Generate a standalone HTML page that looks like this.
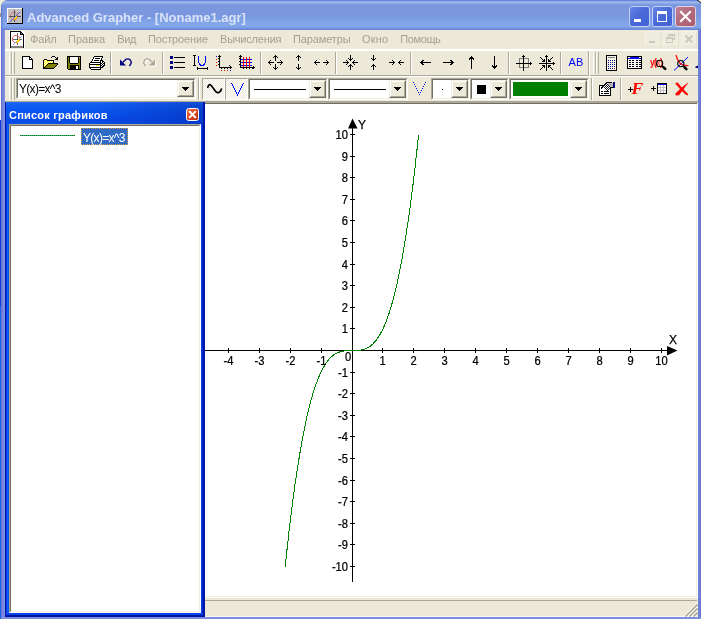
<!DOCTYPE html><html><head><meta charset="utf-8"><title>Advanced Grapher</title><style>
*{margin:0;padding:0;box-sizing:border-box}
html,body{width:701px;height:619px;overflow:hidden;background:#ece9d8}
body{position:relative;font-family:"Liberation Sans",sans-serif;font-size:11px;color:#000}
.a{position:absolute}
.t{position:absolute;white-space:nowrap;line-height:1}
svg{position:absolute;overflow:visible}
.ce{shape-rendering:crispEdges}
</style></head><body><div id="root" class="a" style="left:0;top:0;width:701px;height:619px;will-change:transform">
<div class="a" style="left:0px;top:0px;width:1px;height:619px;background:linear-gradient(#ece9d8 0,#ece9d8 13px,#9c9a8c 13px,#9c9a8c 17px,#f6f5f0 17px,#f6f5f0 120px,#0a3ae0 120px,#0a3ae0 306px,#1264ee 306px);"></div>
<div class="a" style="left:1px;top:0px;width:704px;height:619px;background:linear-gradient(90deg,#6670d2 0,#7480da 1.5px,#7e90e1 3px,#8093e2 4px,#7b8de0 693px,#7484dc 697px,#6a76cc 700px);border-radius:7px 7px 0 0"></div>
<div class="a" style="left:1px;top:0px;width:704px;height:30px;background:linear-gradient(#6280d6 0,#6a88da 1px,#98b3eb 1.6px,#9ab5ec 2.6px,#84a0e3 4px,#7a96df 5.5px,#7a97e0 16px,#83a8ea 24px,#83a7ea 26px,#7a98e2 28px,#6a84d8 29.5px,#6880d6 30px);border-radius:7px 7px 0 0"></div>
<div class="a" style="left:1px;top:6px;width:2px;height:24px;background:linear-gradient(90deg,rgba(80,100,200,.7),rgba(80,100,200,0));"></div>
<div class="a" style="left:5px;top:30px;width:693px;height:587px;background:#ece9d8;"></div>
<div class="a" style="left:1px;top:617px;width:700px;height:2px;background:#7b8de0;"></div>
<div class="t" id="title" style="left:27px;top:10.5px;font-size:13px;font-weight:bold;color:#d9e3f8">Advanced Grapher - [Noname1.agr]</div>
<div class="a" style="left:629px;top:6px;width:21px;height:21px;background:linear-gradient(135deg,#6586e8 0,#4b6ad9 45%,#4262d4 100%);border:1px solid #c3d0f6;border-radius:3px"></div>
<div class="a" style="left:652px;top:6px;width:21px;height:21px;background:linear-gradient(135deg,#6586e8 0,#4b6ad9 45%,#4262d4 100%);border:1px solid #c3d0f6;border-radius:3px"></div>
<div class="a" style="left:675px;top:6px;width:21px;height:21px;background:linear-gradient(135deg,#bd8298 0,#b26a7c 45%,#aa5e70 100%);border:1px solid #e6d3e0;border-radius:3px"></div>
<div class="a" style="left:9px;top:31px;width:16px;height:17px;background:#fff;"></div>
<div class="t mn" style="left:30px;top:34px;color:#a5a190;letter-spacing:-0.14px">Файл</div>
<div class="t mn" style="left:68px;top:34px;color:#a5a190;letter-spacing:0.00px">Правка</div>
<div class="t mn" style="left:117.2px;top:34px;color:#a5a190;letter-spacing:-0.30px">Вид</div>
<div class="t mn" style="left:148px;top:34px;color:#a5a190;letter-spacing:-0.12px">Построение</div>
<div class="t mn" style="left:220px;top:34px;color:#a5a190;letter-spacing:-0.20px">Вычисления</div>
<div class="t mn" style="left:293px;top:34px;color:#a5a190;letter-spacing:-0.12px">Параметры</div>
<div class="t mn" style="left:362px;top:34px;color:#a5a190;letter-spacing:0.21px">Окно</div>
<div class="t mn" style="left:400.3px;top:34px;color:#a5a190;letter-spacing:-0.40px">Помощь</div>
<div class="a" style="left:645px;top:31px;width:16px;height:16px;background:#efede0;border:1px solid #f3f1e6;border-right-color:#e6e3d2;border-bottom-color:#e6e3d2"></div>
<div class="a" style="left:663px;top:31px;width:16px;height:16px;background:#efede0;border:1px solid #f3f1e6;border-right-color:#e6e3d2;border-bottom-color:#e6e3d2"></div>
<div class="a" style="left:681px;top:31px;width:16px;height:16px;background:#efede0;border:1px solid #f3f1e6;border-right-color:#e6e3d2;border-bottom-color:#e6e3d2"></div>
<div class="a" style="left:5px;top:49px;width:693px;height:2px;background:#fff;"></div>
<div class="a" style="left:5px;top:75px;width:693px;height:1px;background:#aca899;"></div>
<div class="a" style="left:5px;top:76px;width:693px;height:1px;background:#fff;"></div>
<div class="t" style="left:568.5px;top:57px;font-size:11px;color:#0000ff;letter-spacing:0.2px">AB</div>
<div class="t" style="left:649.5px;top:56.5px;font-size:10.5px;font-weight:bold;color:#ff0000;letter-spacing:-0.9px;transform:scaleX(.8);transform-origin:0 0">y(x)</div>
<div class="a" style="left:5px;top:101px;width:693px;height:1px;background:#aca899;"></div>
<div class="a" style="left:205px;top:102px;width:493px;height:1px;background:#aca899;"></div>
<div class="a" style="left:205px;top:103px;width:493px;height:1px;background:#716f64;"></div>
<div class="a" style="left:16px;top:78px;width:180px;height:21px;background:#fff;border-left:1px solid #aca899;border-top:1px solid #aca899;border-right:1px solid #fff;border-bottom:1px solid #fff"></div>
<div class="a" style="left:17px;top:79px;width:178px;height:19px;background:#fff;border-left:1px solid #716f64;border-top:1px solid #716f64;border-right:1px solid #f1efe2;border-bottom:1px solid #f1efe2"></div>
<div class="a" style="left:177px;top:80px;width:17px;height:17px;background:#ece9d8;border-left:1px solid #f1efe2;border-top:1px solid #f1efe2;border-right:1px solid #716f64;border-bottom:1px solid #716f64"></div>
<div class="a" style="left:178px;top:81px;width:15px;height:15px;background:#ece9d8;border-left:1px solid #fff;border-top:1px solid #fff;border-right:1px solid #aca899;border-bottom:1px solid #aca899"></div>
<div class="t" id="cbt" style="left:19px;top:82.5px;font-size:12px;letter-spacing:-0.7px">Y(x)=x^3</div>
<div class="a" style="left:202px;top:78px;width:23px;height:22px;background:#f6f5ee;border-left:1px solid #aca899;border-top:1px solid #aca899;border-right:1px solid #fff;border-bottom:1px solid #fff;background-image:repeating-conic-gradient(#fff 0 25%,#ece9d8 0 50%);background-size:2px 2px"></div>
<div class="a" style="left:225px;top:78px;width:23px;height:22px;background:#f6f5ee;border-left:1px solid #aca899;border-top:1px solid #aca899;border-right:1px solid #fff;border-bottom:1px solid #fff;background-image:repeating-conic-gradient(#fff 0 25%,#ece9d8 0 50%);background-size:2px 2px"></div>
<div class="a" style="left:248px;top:78px;width:80px;height:22px;background:#fff;border-left:1px solid #aca899;border-top:1px solid #aca899;border-right:1px solid #fff;border-bottom:1px solid #fff"></div>
<div class="a" style="left:249px;top:79px;width:78px;height:20px;background:#fff;border-left:1px solid #716f64;border-top:1px solid #716f64;border-right:1px solid #f1efe2;border-bottom:1px solid #f1efe2"></div>
<div class="a" style="left:309px;top:80px;width:17px;height:18px;background:#ece9d8;border-left:1px solid #f1efe2;border-top:1px solid #f1efe2;border-right:1px solid #716f64;border-bottom:1px solid #716f64"></div>
<div class="a" style="left:310px;top:81px;width:15px;height:16px;background:#ece9d8;border-left:1px solid #fff;border-top:1px solid #fff;border-right:1px solid #aca899;border-bottom:1px solid #aca899"></div>
<div class="a" style="left:328px;top:78px;width:80px;height:22px;background:#fff;border-left:1px solid #aca899;border-top:1px solid #aca899;border-right:1px solid #fff;border-bottom:1px solid #fff"></div>
<div class="a" style="left:329px;top:79px;width:78px;height:20px;background:#fff;border-left:1px solid #716f64;border-top:1px solid #716f64;border-right:1px solid #f1efe2;border-bottom:1px solid #f1efe2"></div>
<div class="a" style="left:389px;top:80px;width:17px;height:18px;background:#ece9d8;border-left:1px solid #f1efe2;border-top:1px solid #f1efe2;border-right:1px solid #716f64;border-bottom:1px solid #716f64"></div>
<div class="a" style="left:390px;top:81px;width:15px;height:16px;background:#ece9d8;border-left:1px solid #fff;border-top:1px solid #fff;border-right:1px solid #aca899;border-bottom:1px solid #aca899"></div>
<div class="a" style="left:431px;top:78px;width:39px;height:22px;background:#fff;border-left:1px solid #aca899;border-top:1px solid #aca899;border-right:1px solid #fff;border-bottom:1px solid #fff"></div>
<div class="a" style="left:432px;top:79px;width:37px;height:20px;background:#fff;border-left:1px solid #716f64;border-top:1px solid #716f64;border-right:1px solid #f1efe2;border-bottom:1px solid #f1efe2"></div>
<div class="a" style="left:451px;top:80px;width:17px;height:18px;background:#ece9d8;border-left:1px solid #f1efe2;border-top:1px solid #f1efe2;border-right:1px solid #716f64;border-bottom:1px solid #716f64"></div>
<div class="a" style="left:452px;top:81px;width:15px;height:16px;background:#ece9d8;border-left:1px solid #fff;border-top:1px solid #fff;border-right:1px solid #aca899;border-bottom:1px solid #aca899"></div>
<div class="a" style="left:470px;top:78px;width:39px;height:22px;background:#fff;border-left:1px solid #aca899;border-top:1px solid #aca899;border-right:1px solid #fff;border-bottom:1px solid #fff"></div>
<div class="a" style="left:471px;top:79px;width:37px;height:20px;background:#fff;border-left:1px solid #716f64;border-top:1px solid #716f64;border-right:1px solid #f1efe2;border-bottom:1px solid #f1efe2"></div>
<div class="a" style="left:490px;top:80px;width:17px;height:18px;background:#ece9d8;border-left:1px solid #f1efe2;border-top:1px solid #f1efe2;border-right:1px solid #716f64;border-bottom:1px solid #716f64"></div>
<div class="a" style="left:491px;top:81px;width:15px;height:16px;background:#ece9d8;border-left:1px solid #fff;border-top:1px solid #fff;border-right:1px solid #aca899;border-bottom:1px solid #aca899"></div>
<div class="a" style="left:509px;top:78px;width:80px;height:22px;background:#fff;border-left:1px solid #aca899;border-top:1px solid #aca899;border-right:1px solid #fff;border-bottom:1px solid #fff"></div>
<div class="a" style="left:510px;top:79px;width:78px;height:20px;background:#fff;border-left:1px solid #716f64;border-top:1px solid #716f64;border-right:1px solid #f1efe2;border-bottom:1px solid #f1efe2"></div>
<div class="a" style="left:570px;top:80px;width:17px;height:18px;background:#ece9d8;border-left:1px solid #f1efe2;border-top:1px solid #f1efe2;border-right:1px solid #716f64;border-bottom:1px solid #716f64"></div>
<div class="a" style="left:571px;top:81px;width:15px;height:16px;background:#ece9d8;border-left:1px solid #fff;border-top:1px solid #fff;border-right:1px solid #aca899;border-bottom:1px solid #aca899"></div>
<div class="t" style="left:631.5px;top:80px;font-family:'Liberation Serif',serif;font-size:17.5px;font-weight:bold;font-style:italic;color:#ff0000">F</div>
<div class="a" style="left:5px;top:102px;width:200px;height:515px;background:#0831d9;"></div>
<div class="a" style="left:5px;top:102px;width:200px;height:515px;background:linear-gradient(90deg,#0014c8 0,#0a34e4 1.5px,#1060f2 2.5px,#0a4cea 4px,#0a4af0 196px,#0030d8 197px,#0018a8 199px,#00129a 200px);"></div>
<div class="a" style="left:5px;top:102px;width:200px;height:22px;background:linear-gradient(#2a6cf8 0,#1260f4 2px,#0a56f0 9px,#084ce8 17px,#0a4eea 22px);"></div>
<div class="a" style="left:85px;top:102px;width:118px;height:22px;background:linear-gradient(90deg,rgba(0,20,140,0),rgba(0,20,140,.32));"></div>
<div class="a" style="left:5px;top:102px;width:1px;height:515px;background:#0018b0;"></div>
<div class="a" style="left:203px;top:102px;width:2px;height:515px;background:#0016a8;"></div>
<div class="a" style="left:6px;top:613px;width:197px;height:2px;background:#0a44ee;"></div>
<div class="a" style="left:5px;top:615px;width:200px;height:2px;background:#00159e;"></div>
<div class="t" id="ptitle" style="left:9px;top:110px;font-size:11px;font-weight:bold;color:#fff;letter-spacing:0.22px">Список графиков</div>
<div class="a" style="left:186px;top:108px;width:13px;height:13px;background:linear-gradient(135deg,#ea7a55 0,#dc4a22 45%,#b8300e 100%);border:1px solid #fff;border-radius:2.5px"></div>
<div class="a" style="left:9px;top:124px;width:192px;height:489px;background:#fff;border-left:1px solid #aca899;border-top:1px solid #aca899;border-right:1px solid #fff;border-bottom:1px solid #fff"></div>
<div class="a" style="left:10px;top:125px;width:190px;height:487px;background:#fff;border-left:1px solid #716f64;border-top:1px solid #716f64;border-right:1px solid #f1efe2;border-bottom:1px solid #f1efe2"></div>
<div class="a" style="left:81px;top:128px;width:47px;height:17px;background:#316ac5;outline:1px dotted #d6a24a;outline-offset:-1px"></div>
<div class="t" id="lit" style="left:83px;top:131.5px;font-size:12px;letter-spacing:-0.7px;color:#fff">Y(x)=x^3</div>
<div class="a" style="left:20px;top:135px;width:55px;height:1px;background:repeating-linear-gradient(90deg,#008000 0,#008000 1px,#3ea08a 1px,#3ea08a 2px);"></div>
<div class="a" style="left:205px;top:104px;width:491px;height:492px;background:#fff;"></div>
<div class="a" style="left:696px;top:104px;width:1px;height:493px;background:#f1efe2;"></div>
<div class="a" style="left:697px;top:103px;width:1px;height:495px;background:#fff;"></div>
<div class="a" style="left:205px;top:596px;width:492px;height:1px;background:#f1efe2;"></div>
<div class="a" style="left:205px;top:597px;width:492px;height:1px;background:#fff;"></div>
<div class="a" style="left:205px;top:600px;width:492px;height:1px;background:#aca899;"></div>
<div class="a" style="left:205px;top:616px;width:493px;height:1px;background:#f8f7f1;"></div>
<svg style="left:0;top:0" width="701" height="619" viewBox="0 0 701 619"><g class="ce" stroke="#000" stroke-width="1" fill="none"><path d="M205 350.5H668 M352.5 127V582"/><path d="M228.5 348V353"/><path d="M259.5 348V353"/><path d="M290.5 348V353"/><path d="M321.5 348V353"/><path d="M382.5 348V353"/><path d="M413.5 348V353"/><path d="M444.5 348V353"/><path d="M475.5 348V353"/><path d="M506.5 348V353"/><path d="M537.5 348V353"/><path d="M568.5 348V353"/><path d="M599.5 348V353"/><path d="M630.5 348V353"/><path d="M661.5 348V353"/><path d="M350 566.5H355"/><path d="M350 544.5H355"/><path d="M350 523.5H355"/><path d="M350 501.5H355"/><path d="M350 480.5H355"/><path d="M350 458.5H355"/><path d="M350 436.5H355"/><path d="M350 415.5H355"/><path d="M350 393.5H355"/><path d="M350 372.5H355"/><path d="M350 328.5H355"/><path d="M350 307.5H355"/><path d="M350 285.5H355"/><path d="M350 264.5H355"/><path d="M350 242.5H355"/><path d="M350 220.5H355"/><path d="M350 199.5H355"/><path d="M350 177.5H355"/><path d="M350 156.5H355"/><path d="M350 134.5H355"/></g><path d="M667 346L677.5 350.5L667 355.5Z" fill="#000"/><path d="M348 128.5L352.5 118.5L357.5 128.5Z" fill="#000"/><polyline class="ce" fill="none" stroke="#008000" stroke-width="1" points="285.2,566.6 286.2,557.5 287.1,548.6 288.1,540.0 289.0,531.6 290.0,523.5 290.9,515.7 291.9,508.1 292.8,500.7 293.8,493.5 294.7,486.6 295.7,479.9 296.7,473.5 297.6,467.2 298.6,461.2 299.5,455.4 300.5,449.8 301.4,444.4 302.4,439.1 303.3,434.1 304.3,429.3 305.2,424.7 306.2,420.2 307.1,416.0 308.1,411.9 309.0,408.0 310.0,404.2 310.9,400.7 311.9,397.3 312.8,394.0 313.8,390.9 314.7,388.0 315.7,385.2 316.7,382.5 317.6,380.0 318.6,377.6 319.5,375.4 320.5,373.2 321.4,371.2 322.4,369.4 323.3,367.6 324.3,366.0 325.2,364.4 326.2,363.0 327.1,361.7 328.1,360.4 329.0,359.3 330.0,358.3 330.9,357.3 331.9,356.4 332.8,355.6 333.8,354.9 334.8,354.3 335.7,353.7 336.7,353.2 337.6,352.7 338.6,352.3 339.5,352.0 340.5,351.7 341.4,351.4 342.4,351.2 343.3,351.1 344.3,350.9 345.2,350.8 346.2,350.7 347.1,350.7 348.1,350.6 349.0,350.6 350.0,350.6 350.9,350.6 351.9,350.6 352.9,350.6 353.8,350.6 354.8,350.6 355.7,350.6 356.7,350.5 357.6,350.5 358.6,350.4 359.5,350.3 360.5,350.1 361.4,350.0 362.4,349.8 363.3,349.5 364.3,349.2 365.2,348.9 366.2,348.5 367.1,348.0 368.1,347.5 369.0,346.9 370.0,346.3 371.0,345.6 371.9,344.8 372.9,343.9 373.8,342.9 374.8,341.9 375.7,340.8 376.7,339.5 377.6,338.2 378.6,336.8 379.5,335.2 380.5,333.6 381.4,331.8 382.4,330.0 383.3,328.0 384.3,325.8 385.2,323.6 386.2,321.2 387.1,318.7 388.1,316.0 389.1,313.2 390.0,310.3 391.0,307.2 391.9,303.9 392.9,300.5 393.8,297.0 394.8,293.2 395.7,289.3 396.7,285.2 397.6,281.0 398.6,276.5 399.5,271.9 400.5,267.1 401.4,262.1 402.4,256.8 403.3,251.4 404.3,245.8 405.2,240.0 406.2,234.0 407.1,227.7 408.1,221.3 409.1,214.6 410.0,207.7 411.0,200.5 411.9,193.1 412.9,185.5 413.8,177.7 414.8,169.6 415.7,161.2 416.7,152.6 417.6,143.7 418.6,134.6"/><g font-family="Liberation Sans, sans-serif" font-size="12" fill="#000" stroke="#000" stroke-width="0.25"><text transform="translate(228.5,365) scale(.93,1)" text-anchor="middle">-4</text><text transform="translate(259.5,365) scale(.93,1)" text-anchor="middle">-3</text><text transform="translate(290.5,365) scale(.93,1)" text-anchor="middle">-2</text><text transform="translate(321.5,365) scale(.93,1)" text-anchor="middle">-1</text><text transform="translate(382.5,365) scale(.93,1)" text-anchor="middle">1</text><text transform="translate(413.5,365) scale(.93,1)" text-anchor="middle">2</text><text transform="translate(444.5,365) scale(.93,1)" text-anchor="middle">3</text><text transform="translate(475.5,365) scale(.93,1)" text-anchor="middle">4</text><text transform="translate(506.5,365) scale(.93,1)" text-anchor="middle">5</text><text transform="translate(537.5,365) scale(.93,1)" text-anchor="middle">6</text><text transform="translate(568.5,365) scale(.93,1)" text-anchor="middle">7</text><text transform="translate(599.5,365) scale(.93,1)" text-anchor="middle">8</text><text transform="translate(630.5,365) scale(.93,1)" text-anchor="middle">9</text><text transform="translate(661.5,365) scale(.93,1)" text-anchor="middle">10</text><text transform="translate(348,571) scale(.93,1)" text-anchor="end">-10</text><text transform="translate(348,549) scale(.93,1)" text-anchor="end">-9</text><text transform="translate(348,528) scale(.93,1)" text-anchor="end">-8</text><text transform="translate(348,506) scale(.93,1)" text-anchor="end">-7</text><text transform="translate(348,485) scale(.93,1)" text-anchor="end">-6</text><text transform="translate(348,463) scale(.93,1)" text-anchor="end">-5</text><text transform="translate(348,441) scale(.93,1)" text-anchor="end">-4</text><text transform="translate(348,420) scale(.93,1)" text-anchor="end">-3</text><text transform="translate(348,398) scale(.93,1)" text-anchor="end">-2</text><text transform="translate(348,377) scale(.93,1)" text-anchor="end">-1</text><text transform="translate(348,333) scale(.93,1)" text-anchor="end">1</text><text transform="translate(348,312) scale(.93,1)" text-anchor="end">2</text><text transform="translate(348,290) scale(.93,1)" text-anchor="end">3</text><text transform="translate(348,269) scale(.93,1)" text-anchor="end">4</text><text transform="translate(348,247) scale(.93,1)" text-anchor="end">5</text><text transform="translate(348,225) scale(.93,1)" text-anchor="end">6</text><text transform="translate(348,204) scale(.93,1)" text-anchor="end">7</text><text transform="translate(348,182) scale(.93,1)" text-anchor="end">8</text><text transform="translate(348,161) scale(.93,1)" text-anchor="end">9</text><text transform="translate(348,139) scale(.93,1)" text-anchor="end">10</text><text transform="translate(351.3,361) scale(.93,1)" text-anchor="end">0</text><text x="358" y="129">Y</text><text x="669" y="344">X</text></g><g class="ce"><rect x="7" y="8" width="15" height="1" fill="#fff"/><rect x="22" y="8" width="1" height="1" fill="#000"/><rect x="7" y="9" width="1" height="1" fill="#fff"/><rect x="8" y="9" width="14" height="1" fill="#c0c0c0"/><rect x="22" y="9" width="1" height="1" fill="#000"/><rect x="7" y="10" width="1" height="1" fill="#fff"/><rect x="8" y="10" width="6" height="1" fill="#c0c0c0"/><rect x="14" y="10" width="1" height="1" fill="#505050"/><rect x="15" y="10" width="7" height="1" fill="#c0c0c0"/><rect x="22" y="10" width="1" height="1" fill="#000"/><rect x="7" y="11" width="1" height="1" fill="#fff"/><rect x="8" y="11" width="6" height="1" fill="#c0c0c0"/><rect x="14" y="11" width="1" height="1" fill="#505050"/><rect x="15" y="11" width="7" height="1" fill="#c0c0c0"/><rect x="22" y="11" width="1" height="1" fill="#000"/><rect x="7" y="12" width="1" height="1" fill="#fff"/><rect x="8" y="12" width="4" height="1" fill="#c0c0c0"/><rect x="12" y="12" width="2" height="1" fill="#d87878"/><rect x="14" y="12" width="1" height="1" fill="#505050"/><rect x="15" y="12" width="1" height="1" fill="#d87878"/><rect x="16" y="12" width="3" height="1" fill="#c0c0c0"/><rect x="19" y="12" width="1" height="1" fill="#5858d0"/><rect x="20" y="12" width="2" height="1" fill="#c0c0c0"/><rect x="22" y="12" width="1" height="1" fill="#000"/><rect x="7" y="13" width="1" height="1" fill="#fff"/><rect x="8" y="13" width="3" height="1" fill="#c0c0c0"/><rect x="11" y="13" width="1" height="1" fill="#d87878"/><rect x="12" y="13" width="2" height="1" fill="#c0c0c0"/><rect x="14" y="13" width="1" height="1" fill="#505050"/><rect x="15" y="13" width="1" height="1" fill="#c0c0c0"/><rect x="16" y="13" width="1" height="1" fill="#d87878"/><rect x="17" y="13" width="1" height="1" fill="#c0c0c0"/><rect x="18" y="13" width="1" height="1" fill="#5858d0"/><rect x="19" y="13" width="3" height="1" fill="#c0c0c0"/><rect x="22" y="13" width="1" height="1" fill="#000"/><rect x="7" y="14" width="1" height="1" fill="#fff"/><rect x="8" y="14" width="2" height="1" fill="#c0c0c0"/><rect x="10" y="14" width="1" height="1" fill="#d87878"/><rect x="11" y="14" width="3" height="1" fill="#c0c0c0"/><rect x="14" y="14" width="1" height="1" fill="#505050"/><rect x="15" y="14" width="2" height="1" fill="#c0c0c0"/><rect x="17" y="14" width="1" height="1" fill="#5858d0"/><rect x="18" y="14" width="4" height="1" fill="#c0c0c0"/><rect x="22" y="14" width="1" height="1" fill="#000"/><rect x="7" y="15" width="1" height="1" fill="#fff"/><rect x="8" y="15" width="2" height="1" fill="#c0c0c0"/><rect x="10" y="15" width="1" height="1" fill="#d87878"/><rect x="11" y="15" width="3" height="1" fill="#c0c0c0"/><rect x="14" y="15" width="1" height="1" fill="#505050"/><rect x="15" y="15" width="1" height="1" fill="#c0c0c0"/><rect x="16" y="15" width="1" height="1" fill="#5858d0"/><rect x="17" y="15" width="1" height="1" fill="#d87878"/><rect x="18" y="15" width="4" height="1" fill="#c0c0c0"/><rect x="22" y="15" width="1" height="1" fill="#000"/><rect x="7" y="16" width="1" height="1" fill="#fff"/><rect x="8" y="16" width="1" height="1" fill="#c0c0c0"/><rect x="9" y="16" width="6" height="1" fill="#505050"/><rect x="15" y="16" width="1" height="1" fill="#5858d0"/><rect x="16" y="16" width="1" height="1" fill="#ffee00"/><rect x="17" y="16" width="4" height="1" fill="#505050"/><rect x="21" y="16" width="1" height="1" fill="#c0c0c0"/><rect x="22" y="16" width="1" height="1" fill="#000"/><rect x="7" y="17" width="1" height="1" fill="#fff"/><rect x="8" y="17" width="2" height="1" fill="#c0c0c0"/><rect x="10" y="17" width="1" height="1" fill="#d87878"/><rect x="11" y="17" width="3" height="1" fill="#c0c0c0"/><rect x="14" y="17" width="1" height="1" fill="#5858d0"/><rect x="15" y="17" width="2" height="1" fill="#ffee00"/><rect x="17" y="17" width="1" height="1" fill="#d87878"/><rect x="18" y="17" width="4" height="1" fill="#c0c0c0"/><rect x="22" y="17" width="1" height="1" fill="#000"/><rect x="7" y="18" width="1" height="1" fill="#fff"/><rect x="8" y="18" width="3" height="1" fill="#c0c0c0"/><rect x="11" y="18" width="1" height="1" fill="#d87878"/><rect x="12" y="18" width="1" height="1" fill="#c0c0c0"/><rect x="13" y="18" width="1" height="1" fill="#5858d0"/><rect x="14" y="18" width="2" height="1" fill="#ffee00"/><rect x="16" y="18" width="1" height="1" fill="#ff9000"/><rect x="17" y="18" width="5" height="1" fill="#c0c0c0"/><rect x="22" y="18" width="1" height="1" fill="#000"/><rect x="7" y="19" width="1" height="1" fill="#fff"/><rect x="8" y="19" width="4" height="1" fill="#c0c0c0"/><rect x="12" y="19" width="1" height="1" fill="#5858d0"/><rect x="13" y="19" width="2" height="1" fill="#ff9000"/><rect x="15" y="19" width="1" height="1" fill="#d87878"/><rect x="16" y="19" width="6" height="1" fill="#c0c0c0"/><rect x="22" y="19" width="1" height="1" fill="#000"/><rect x="7" y="20" width="1" height="1" fill="#fff"/><rect x="8" y="20" width="3" height="1" fill="#c0c0c0"/><rect x="11" y="20" width="1" height="1" fill="#5858d0"/><rect x="12" y="20" width="2" height="1" fill="#c0c0c0"/><rect x="14" y="20" width="1" height="1" fill="#505050"/><rect x="15" y="20" width="7" height="1" fill="#c0c0c0"/><rect x="22" y="20" width="1" height="1" fill="#000"/><rect x="7" y="21" width="1" height="1" fill="#fff"/><rect x="8" y="21" width="2" height="1" fill="#c0c0c0"/><rect x="10" y="21" width="1" height="1" fill="#5858d0"/><rect x="11" y="21" width="3" height="1" fill="#c0c0c0"/><rect x="14" y="21" width="1" height="1" fill="#505050"/><rect x="15" y="21" width="7" height="1" fill="#c0c0c0"/><rect x="22" y="21" width="1" height="1" fill="#000"/><rect x="7" y="22" width="1" height="1" fill="#fff"/><rect x="8" y="22" width="14" height="1" fill="#c0c0c0"/><rect x="22" y="22" width="1" height="1" fill="#000"/><rect x="7" y="23" width="16" height="1" fill="#000"/></g><rect class="ce" x="634" y="19" width="7" height="3" fill="#fff"/><path d="M696.6 0H701V3.6Z" fill="#15151f"/><path d="M698 0H701V2.4Z" fill="#ece9d8"/><path class="ce" d="M657 11h10v11h-10z M658 14v7h8v-7z" fill="#fff" fill-rule="evenodd"/><path d="M681 12L690 21M690 12L681 21" stroke="#fff" stroke-width="2.2" stroke-linecap="square" fill="none"/><g class="ce"><rect x="10" y="31" width="11" height="1" fill="#000"/><rect x="10" y="32" width="1" height="1" fill="#000"/><rect x="11" y="32" width="9" height="1" fill="#fff"/><rect x="20" y="32" width="2" height="1" fill="#000"/><rect x="10" y="33" width="1" height="1" fill="#000"/><rect x="11" y="33" width="6" height="1" fill="#fff"/><rect x="17" y="33" width="1" height="1" fill="#686868"/><rect x="18" y="33" width="2" height="1" fill="#fff"/><rect x="20" y="33" width="1" height="1" fill="#000"/><rect x="21" y="33" width="1" height="1" fill="#808080"/><rect x="22" y="33" width="1" height="1" fill="#000"/><rect x="10" y="34" width="1" height="1" fill="#000"/><rect x="11" y="34" width="6" height="1" fill="#fff"/><rect x="17" y="34" width="1" height="1" fill="#686868"/><rect x="18" y="34" width="2" height="1" fill="#fff"/><rect x="20" y="34" width="4" height="1" fill="#000"/><rect x="10" y="35" width="1" height="1" fill="#000"/><rect x="11" y="35" width="3" height="1" fill="#fff"/><rect x="14" y="35" width="3" height="1" fill="#ff6868"/><rect x="17" y="35" width="1" height="1" fill="#686868"/><rect x="18" y="35" width="5" height="1" fill="#fff"/><rect x="23" y="35" width="1" height="1" fill="#000"/><rect x="10" y="36" width="1" height="1" fill="#000"/><rect x="11" y="36" width="2" height="1" fill="#fff"/><rect x="13" y="36" width="1" height="1" fill="#ff6868"/><rect x="14" y="36" width="3" height="1" fill="#fff"/><rect x="17" y="36" width="1" height="1" fill="#686868"/><rect x="18" y="36" width="1" height="1" fill="#ff6868"/><rect x="19" y="36" width="2" height="1" fill="#fff"/><rect x="21" y="36" width="1" height="1" fill="#b0b0f0"/><rect x="22" y="36" width="1" height="1" fill="#fff"/><rect x="23" y="36" width="1" height="1" fill="#000"/><rect x="10" y="37" width="1" height="1" fill="#000"/><rect x="11" y="37" width="1" height="1" fill="#fff"/><rect x="12" y="37" width="1" height="1" fill="#ff6868"/><rect x="13" y="37" width="4" height="1" fill="#fff"/><rect x="17" y="37" width="1" height="1" fill="#686868"/><rect x="18" y="37" width="1" height="1" fill="#fff"/><rect x="19" y="37" width="1" height="1" fill="#ff6868"/><rect x="20" y="37" width="1" height="1" fill="#b0b0f0"/><rect x="21" y="37" width="2" height="1" fill="#fff"/><rect x="23" y="37" width="1" height="1" fill="#000"/><rect x="10" y="38" width="1" height="1" fill="#000"/><rect x="11" y="38" width="1" height="1" fill="#fff"/><rect x="12" y="38" width="1" height="1" fill="#ff6868"/><rect x="13" y="38" width="4" height="1" fill="#fff"/><rect x="17" y="38" width="1" height="1" fill="#686868"/><rect x="18" y="38" width="1" height="1" fill="#fff"/><rect x="19" y="38" width="1" height="1" fill="#b0b0f0"/><rect x="20" y="38" width="3" height="1" fill="#fff"/><rect x="23" y="38" width="1" height="1" fill="#000"/><rect x="10" y="39" width="1" height="1" fill="#000"/><rect x="11" y="39" width="1" height="1" fill="#fff"/><rect x="12" y="39" width="1" height="1" fill="#ff6868"/><rect x="13" y="39" width="4" height="1" fill="#686868"/><rect x="17" y="39" width="1" height="1" fill="#202060"/><rect x="18" y="39" width="1" height="1" fill="#ffee00"/><rect x="19" y="39" width="1" height="1" fill="#ff9000"/><rect x="20" y="39" width="2" height="1" fill="#686868"/><rect x="22" y="39" width="1" height="1" fill="#fff"/><rect x="23" y="39" width="1" height="1" fill="#000"/><rect x="10" y="40" width="1" height="1" fill="#000"/><rect x="11" y="40" width="1" height="1" fill="#fff"/><rect x="12" y="40" width="1" height="1" fill="#ff6868"/><rect x="13" y="40" width="4" height="1" fill="#fff"/><rect x="17" y="40" width="2" height="1" fill="#ffee00"/><rect x="19" y="40" width="1" height="1" fill="#ff9000"/><rect x="20" y="40" width="3" height="1" fill="#fff"/><rect x="23" y="40" width="1" height="1" fill="#000"/><rect x="10" y="41" width="1" height="1" fill="#000"/><rect x="11" y="41" width="2" height="1" fill="#fff"/><rect x="13" y="41" width="1" height="1" fill="#ff6868"/><rect x="14" y="41" width="2" height="1" fill="#fff"/><rect x="16" y="41" width="1" height="1" fill="#b0b0f0"/><rect x="17" y="41" width="1" height="1" fill="#ffee00"/><rect x="18" y="41" width="1" height="1" fill="#ff9000"/><rect x="19" y="41" width="4" height="1" fill="#fff"/><rect x="23" y="41" width="1" height="1" fill="#000"/><rect x="10" y="42" width="1" height="1" fill="#000"/><rect x="11" y="42" width="3" height="1" fill="#fff"/><rect x="14" y="42" width="1" height="1" fill="#ff6868"/><rect x="15" y="42" width="1" height="1" fill="#b0b0f0"/><rect x="16" y="42" width="2" height="1" fill="#ff9000"/><rect x="18" y="42" width="5" height="1" fill="#fff"/><rect x="23" y="42" width="1" height="1" fill="#000"/><rect x="10" y="43" width="1" height="1" fill="#000"/><rect x="11" y="43" width="3" height="1" fill="#fff"/><rect x="14" y="43" width="1" height="1" fill="#b0b0f0"/><rect x="15" y="43" width="2" height="1" fill="#fff"/><rect x="17" y="43" width="1" height="1" fill="#686868"/><rect x="18" y="43" width="5" height="1" fill="#fff"/><rect x="23" y="43" width="1" height="1" fill="#000"/><rect x="10" y="44" width="1" height="1" fill="#000"/><rect x="11" y="44" width="2" height="1" fill="#fff"/><rect x="13" y="44" width="1" height="1" fill="#b0b0f0"/><rect x="14" y="44" width="3" height="1" fill="#fff"/><rect x="17" y="44" width="1" height="1" fill="#686868"/><rect x="18" y="44" width="5" height="1" fill="#fff"/><rect x="23" y="44" width="1" height="1" fill="#000"/><rect x="10" y="45" width="1" height="1" fill="#000"/><rect x="11" y="45" width="12" height="1" fill="#fff"/><rect x="23" y="45" width="1" height="1" fill="#000"/><rect x="10" y="46" width="1" height="1" fill="#000"/><rect x="11" y="46" width="12" height="1" fill="#808080"/><rect x="23" y="46" width="1" height="1" fill="#000"/><rect x="10" y="47" width="1" height="1" fill="#000"/><rect x="11" y="47" width="12" height="1" fill="#808080"/><rect x="23" y="47" width="1" height="1" fill="#000"/></g><rect class="ce" x="649" y="41" width="6" height="2" fill="#cbc8ba"/><path class="ce" d="M668 34h7v6h-2v-1h1v-3h-5v1h-1z M666 37h7v6h-7z M667 39v3h5v-3z" fill="#cbc8ba" fill-rule="evenodd"/><path d="M685.7 35.7L692.3 42.3M692.3 35.7L685.7 42.3" stroke="#cbc8ba" stroke-width="2" fill="none"/><rect class="ce" x="9" y="52" width="1" height="22" fill="#fff"/><rect class="ce" x="10" y="52" width="1" height="22" fill="#e4e1d0"/><rect class="ce" x="11" y="52" width="1" height="22" fill="#b4b09c"/><rect class="ce" x="12" y="52" width="1" height="22" fill="#fff"/><rect class="ce" x="13" y="52" width="1" height="22" fill="#e4e1d0"/><rect class="ce" x="14" y="52" width="1" height="22" fill="#b4b09c"/><g class="ce"><rect x="22" y="56" width="8" height="1" fill="#000"/><rect x="22" y="57" width="1" height="1" fill="#000"/><rect x="23" y="57" width="6" height="1" fill="#fff"/><rect x="29" y="57" width="2" height="1" fill="#000"/><rect x="22" y="58" width="1" height="1" fill="#000"/><rect x="23" y="58" width="6" height="1" fill="#fff"/><rect x="29" y="58" width="1" height="1" fill="#000"/><rect x="30" y="58" width="1" height="1" fill="#fff"/><rect x="31" y="58" width="1" height="1" fill="#000"/><rect x="22" y="59" width="1" height="1" fill="#000"/><rect x="23" y="59" width="6" height="1" fill="#fff"/><rect x="29" y="59" width="4" height="1" fill="#000"/><rect x="22" y="60" width="1" height="1" fill="#000"/><rect x="23" y="60" width="9" height="1" fill="#fff"/><rect x="32" y="60" width="1" height="1" fill="#000"/><rect x="22" y="61" width="1" height="1" fill="#000"/><rect x="23" y="61" width="9" height="1" fill="#fff"/><rect x="32" y="61" width="1" height="1" fill="#000"/><rect x="22" y="62" width="1" height="1" fill="#000"/><rect x="23" y="62" width="9" height="1" fill="#fff"/><rect x="32" y="62" width="1" height="1" fill="#000"/><rect x="22" y="63" width="1" height="1" fill="#000"/><rect x="23" y="63" width="9" height="1" fill="#fff"/><rect x="32" y="63" width="1" height="1" fill="#000"/><rect x="22" y="64" width="1" height="1" fill="#000"/><rect x="23" y="64" width="9" height="1" fill="#fff"/><rect x="32" y="64" width="1" height="1" fill="#000"/><rect x="22" y="65" width="1" height="1" fill="#000"/><rect x="23" y="65" width="9" height="1" fill="#fff"/><rect x="32" y="65" width="1" height="1" fill="#000"/><rect x="22" y="66" width="1" height="1" fill="#000"/><rect x="23" y="66" width="9" height="1" fill="#fff"/><rect x="32" y="66" width="1" height="1" fill="#000"/><rect x="22" y="67" width="1" height="1" fill="#000"/><rect x="23" y="67" width="9" height="1" fill="#fff"/><rect x="32" y="67" width="1" height="1" fill="#000"/><rect x="22" y="68" width="11" height="1" fill="#000"/></g><g class="ce"><rect x="52" y="56" width="3" height="1" fill="#000"/><rect x="51" y="57" width="1" height="1" fill="#000"/><rect x="55" y="57" width="1" height="1" fill="#000"/><rect x="57" y="57" width="1" height="1" fill="#000"/><rect x="56" y="58" width="2" height="1" fill="#000"/><rect x="44" y="59" width="3" height="1" fill="#000"/><rect x="55" y="59" width="3" height="1" fill="#000"/><rect x="43" y="60" width="1" height="1" fill="#000"/><rect x="44" y="60" width="1" height="1" fill="#ffff00"/><rect x="45" y="60" width="1" height="1" fill="#fff"/><rect x="46" y="60" width="1" height="1" fill="#ffff00"/><rect x="47" y="60" width="7" height="1" fill="#000"/><rect x="43" y="61" width="1" height="1" fill="#000"/><rect x="44" y="61" width="1" height="1" fill="#fff"/><rect x="45" y="61" width="1" height="1" fill="#ffff00"/><rect x="46" y="61" width="1" height="1" fill="#fff"/><rect x="47" y="61" width="1" height="1" fill="#ffff00"/><rect x="48" y="61" width="1" height="1" fill="#fff"/><rect x="49" y="61" width="1" height="1" fill="#ffff00"/><rect x="50" y="61" width="1" height="1" fill="#fff"/><rect x="51" y="61" width="1" height="1" fill="#ffff00"/><rect x="52" y="61" width="1" height="1" fill="#fff"/><rect x="53" y="61" width="1" height="1" fill="#000"/><rect x="43" y="62" width="1" height="1" fill="#000"/><rect x="44" y="62" width="1" height="1" fill="#ffff00"/><rect x="45" y="62" width="1" height="1" fill="#fff"/><rect x="46" y="62" width="1" height="1" fill="#ffff00"/><rect x="47" y="62" width="1" height="1" fill="#fff"/><rect x="48" y="62" width="1" height="1" fill="#ffff00"/><rect x="49" y="62" width="1" height="1" fill="#fff"/><rect x="50" y="62" width="1" height="1" fill="#ffff00"/><rect x="51" y="62" width="1" height="1" fill="#fff"/><rect x="52" y="62" width="1" height="1" fill="#ffff00"/><rect x="53" y="62" width="1" height="1" fill="#000"/><rect x="43" y="63" width="1" height="1" fill="#000"/><rect x="44" y="63" width="1" height="1" fill="#fff"/><rect x="45" y="63" width="1" height="1" fill="#ffff00"/><rect x="46" y="63" width="1" height="1" fill="#fff"/><rect x="47" y="63" width="1" height="1" fill="#ffff00"/><rect x="48" y="63" width="10" height="1" fill="#000"/><rect x="43" y="64" width="1" height="1" fill="#000"/><rect x="44" y="64" width="1" height="1" fill="#ffff00"/><rect x="45" y="64" width="1" height="1" fill="#fff"/><rect x="46" y="64" width="1" height="1" fill="#ffff00"/><rect x="47" y="64" width="1" height="1" fill="#000"/><rect x="48" y="64" width="9" height="1" fill="#808000"/><rect x="57" y="64" width="1" height="1" fill="#000"/><rect x="43" y="65" width="1" height="1" fill="#000"/><rect x="44" y="65" width="1" height="1" fill="#fff"/><rect x="45" y="65" width="1" height="1" fill="#ffff00"/><rect x="46" y="65" width="1" height="1" fill="#000"/><rect x="47" y="65" width="9" height="1" fill="#808000"/><rect x="56" y="65" width="1" height="1" fill="#000"/><rect x="43" y="66" width="1" height="1" fill="#000"/><rect x="44" y="66" width="1" height="1" fill="#ffff00"/><rect x="45" y="66" width="1" height="1" fill="#000"/><rect x="46" y="66" width="9" height="1" fill="#808000"/><rect x="55" y="66" width="1" height="1" fill="#000"/><rect x="43" y="67" width="2" height="1" fill="#000"/><rect x="45" y="67" width="9" height="1" fill="#808000"/><rect x="54" y="67" width="1" height="1" fill="#000"/><rect x="43" y="68" width="11" height="1" fill="#000"/></g><g class="ce"><rect x="67" y="56" width="14" height="1" fill="#000"/><rect x="67" y="57" width="1" height="1" fill="#000"/><rect x="68" y="57" width="1" height="1" fill="#808000"/><rect x="69" y="57" width="1" height="1" fill="#000"/><rect x="70" y="57" width="8" height="1" fill="#fff"/><rect x="78" y="57" width="1" height="1" fill="#000"/><rect x="79" y="57" width="1" height="1" fill="#c0c0c0"/><rect x="80" y="57" width="1" height="1" fill="#000"/><rect x="67" y="58" width="1" height="1" fill="#000"/><rect x="68" y="58" width="1" height="1" fill="#808000"/><rect x="69" y="58" width="1" height="1" fill="#000"/><rect x="70" y="58" width="8" height="1" fill="#fff"/><rect x="78" y="58" width="1" height="1" fill="#000"/><rect x="79" y="58" width="1" height="1" fill="#808000"/><rect x="80" y="58" width="1" height="1" fill="#000"/><rect x="67" y="59" width="1" height="1" fill="#000"/><rect x="68" y="59" width="1" height="1" fill="#808000"/><rect x="69" y="59" width="1" height="1" fill="#000"/><rect x="70" y="59" width="8" height="1" fill="#fff"/><rect x="78" y="59" width="1" height="1" fill="#000"/><rect x="79" y="59" width="1" height="1" fill="#808000"/><rect x="80" y="59" width="1" height="1" fill="#000"/><rect x="67" y="60" width="1" height="1" fill="#000"/><rect x="68" y="60" width="1" height="1" fill="#808000"/><rect x="69" y="60" width="1" height="1" fill="#000"/><rect x="70" y="60" width="8" height="1" fill="#fff"/><rect x="78" y="60" width="1" height="1" fill="#000"/><rect x="79" y="60" width="1" height="1" fill="#808000"/><rect x="80" y="60" width="1" height="1" fill="#000"/><rect x="67" y="61" width="1" height="1" fill="#000"/><rect x="68" y="61" width="1" height="1" fill="#808000"/><rect x="69" y="61" width="1" height="1" fill="#000"/><rect x="70" y="61" width="8" height="1" fill="#fff"/><rect x="78" y="61" width="1" height="1" fill="#000"/><rect x="79" y="61" width="1" height="1" fill="#808000"/><rect x="80" y="61" width="1" height="1" fill="#000"/><rect x="67" y="62" width="1" height="1" fill="#000"/><rect x="68" y="62" width="1" height="1" fill="#808000"/><rect x="69" y="62" width="1" height="1" fill="#000"/><rect x="70" y="62" width="8" height="1" fill="#fff"/><rect x="78" y="62" width="1" height="1" fill="#000"/><rect x="79" y="62" width="1" height="1" fill="#808000"/><rect x="80" y="62" width="1" height="1" fill="#000"/><rect x="67" y="63" width="1" height="1" fill="#000"/><rect x="68" y="63" width="2" height="1" fill="#808000"/><rect x="70" y="63" width="8" height="1" fill="#000"/><rect x="78" y="63" width="2" height="1" fill="#808000"/><rect x="80" y="63" width="1" height="1" fill="#000"/><rect x="67" y="64" width="1" height="1" fill="#000"/><rect x="68" y="64" width="12" height="1" fill="#808000"/><rect x="80" y="64" width="1" height="1" fill="#000"/><rect x="67" y="65" width="1" height="1" fill="#000"/><rect x="68" y="65" width="2" height="1" fill="#808000"/><rect x="70" y="65" width="9" height="1" fill="#000"/><rect x="79" y="65" width="1" height="1" fill="#808000"/><rect x="80" y="65" width="1" height="1" fill="#000"/><rect x="67" y="66" width="1" height="1" fill="#000"/><rect x="68" y="66" width="2" height="1" fill="#808000"/><rect x="70" y="66" width="6" height="1" fill="#000"/><rect x="76" y="66" width="2" height="1" fill="#fff"/><rect x="78" y="66" width="1" height="1" fill="#000"/><rect x="79" y="66" width="1" height="1" fill="#808000"/><rect x="80" y="66" width="1" height="1" fill="#000"/><rect x="67" y="67" width="1" height="1" fill="#000"/><rect x="68" y="67" width="2" height="1" fill="#808000"/><rect x="70" y="67" width="6" height="1" fill="#000"/><rect x="76" y="67" width="2" height="1" fill="#fff"/><rect x="78" y="67" width="1" height="1" fill="#000"/><rect x="79" y="67" width="1" height="1" fill="#808000"/><rect x="80" y="67" width="1" height="1" fill="#000"/><rect x="67" y="68" width="1" height="1" fill="#000"/><rect x="68" y="68" width="2" height="1" fill="#808000"/><rect x="70" y="68" width="6" height="1" fill="#000"/><rect x="76" y="68" width="2" height="1" fill="#fff"/><rect x="78" y="68" width="1" height="1" fill="#000"/><rect x="79" y="68" width="1" height="1" fill="#808000"/><rect x="80" y="68" width="1" height="1" fill="#000"/><rect x="68" y="69" width="13" height="1" fill="#000"/></g><g class="ce"><rect x="94" y="56" width="9" height="1" fill="#000"/><rect x="93" y="57" width="1" height="1" fill="#000"/><rect x="94" y="57" width="8" height="1" fill="#fff"/><rect x="102" y="57" width="1" height="1" fill="#000"/><rect x="93" y="58" width="1" height="1" fill="#000"/><rect x="94" y="58" width="1" height="1" fill="#fff"/><rect x="95" y="58" width="5" height="1" fill="#000"/><rect x="100" y="58" width="1" height="1" fill="#fff"/><rect x="101" y="58" width="1" height="1" fill="#000"/><rect x="92" y="59" width="1" height="1" fill="#000"/><rect x="93" y="59" width="8" height="1" fill="#fff"/><rect x="101" y="59" width="1" height="1" fill="#000"/><rect x="92" y="60" width="1" height="1" fill="#000"/><rect x="93" y="60" width="1" height="1" fill="#fff"/><rect x="94" y="60" width="5" height="1" fill="#000"/><rect x="99" y="60" width="1" height="1" fill="#fff"/><rect x="100" y="60" width="3" height="1" fill="#000"/><rect x="91" y="61" width="1" height="1" fill="#000"/><rect x="92" y="61" width="8" height="1" fill="#fff"/><rect x="100" y="61" width="1" height="1" fill="#000"/><rect x="101" y="61" width="1" height="1" fill="#fff"/><rect x="102" y="61" width="2" height="1" fill="#000"/><rect x="90" y="62" width="11" height="1" fill="#000"/><rect x="101" y="62" width="1" height="1" fill="#fff"/><rect x="102" y="62" width="1" height="1" fill="#000"/><rect x="103" y="62" width="1" height="1" fill="#fff"/><rect x="104" y="62" width="1" height="1" fill="#000"/><rect x="89" y="63" width="1" height="1" fill="#000"/><rect x="90" y="63" width="10" height="1" fill="#fff"/><rect x="100" y="63" width="2" height="1" fill="#000"/><rect x="102" y="63" width="1" height="1" fill="#fff"/><rect x="103" y="63" width="2" height="1" fill="#000"/><rect x="89" y="64" width="12" height="1" fill="#000"/><rect x="101" y="64" width="1" height="1" fill="#fff"/><rect x="102" y="64" width="1" height="1" fill="#000"/><rect x="103" y="64" width="1" height="1" fill="#fff"/><rect x="104" y="64" width="1" height="1" fill="#000"/><rect x="89" y="65" width="1" height="1" fill="#000"/><rect x="90" y="65" width="6" height="1" fill="#fff"/><rect x="96" y="65" width="3" height="1" fill="#ffff00"/><rect x="99" y="65" width="1" height="1" fill="#fff"/><rect x="100" y="65" width="2" height="1" fill="#000"/><rect x="102" y="65" width="1" height="1" fill="#fff"/><rect x="103" y="65" width="2" height="1" fill="#000"/><rect x="89" y="66" width="1" height="1" fill="#000"/><rect x="90" y="66" width="10" height="1" fill="#fff"/><rect x="100" y="66" width="1" height="1" fill="#000"/><rect x="101" y="66" width="1" height="1" fill="#fff"/><rect x="102" y="66" width="2" height="1" fill="#000"/><rect x="89" y="67" width="14" height="1" fill="#000"/><rect x="90" y="68" width="1" height="1" fill="#000"/><rect x="91" y="68" width="9" height="1" fill="#fff"/><rect x="100" y="68" width="1" height="1" fill="#000"/><rect x="91" y="69" width="10" height="1" fill="#000"/></g><rect class="ce" x="110" y="52" width="1" height="22" fill="#aca899"/><rect class="ce" x="111" y="52" width="1" height="22" fill="#fff"/><path d="M120 59.6V65.6H126Z" fill="#000080"/><path d="M123 62.3L125.8 59.3Q128 58.2 130 59.6Q131.6 61.5 131 63.7L129.3 66" stroke="#000080" stroke-width="1.35" fill="none"/><g transform="translate(1,1)"><path d="M155 59.6V65.6H149Z" fill="#fff"/><path d="M152 62.3L149.2 59.3Q147 58.2 145 59.6Q143.4 61.5 144 63.7L145.7 66" stroke="#fff" stroke-width="1.35" fill="none"/></g><g transform="translate(0,0)"><path d="M155 59.6V65.6H149Z" fill="#aca899"/><path d="M152 62.3L149.2 59.3Q147 58.2 145 59.6Q143.4 61.5 144 63.7L145.7 66" stroke="#aca899" stroke-width="1.35" fill="none"/></g><rect class="ce" x="162" y="52" width="1" height="22" fill="#aca899"/><rect class="ce" x="163" y="52" width="1" height="22" fill="#fff"/><g class="ce"><rect x="170" y="56" width="3" height="1" fill="#000080"/><rect x="170" y="57" width="3" height="1" fill="#000080"/><rect x="174" y="57" width="11" height="1" fill="#000"/><rect x="170" y="58" width="3" height="1" fill="#000080"/><rect x="170" y="61" width="3" height="1" fill="#000080"/><rect x="170" y="62" width="3" height="1" fill="#000080"/><rect x="174" y="62" width="11" height="1" fill="#000"/><rect x="170" y="63" width="3" height="1" fill="#000080"/><rect x="170" y="66" width="3" height="1" fill="#000080"/><rect x="170" y="67" width="3" height="1" fill="#000080"/><rect x="174" y="67" width="11" height="1" fill="#000"/><rect x="170" y="68" width="3" height="1" fill="#000080"/></g><g class="ce"><rect x="193" y="55" width="3" height="1" fill="#000"/><rect x="194" y="56" width="1" height="1" fill="#000"/><rect x="198" y="56" width="1" height="1" fill="#0000ff"/><rect x="205" y="56" width="1" height="1" fill="#0000ff"/><rect x="194" y="57" width="1" height="1" fill="#000"/><rect x="198" y="57" width="1" height="1" fill="#0000ff"/><rect x="205" y="57" width="1" height="1" fill="#0000ff"/><rect x="194" y="58" width="1" height="1" fill="#000"/><rect x="198" y="58" width="1" height="1" fill="#0000ff"/><rect x="205" y="58" width="1" height="1" fill="#0000ff"/><rect x="194" y="59" width="1" height="1" fill="#000"/><rect x="198" y="59" width="1" height="1" fill="#0000ff"/><rect x="205" y="59" width="1" height="1" fill="#0000ff"/><rect x="194" y="60" width="1" height="1" fill="#000"/><rect x="198" y="60" width="1" height="1" fill="#0000ff"/><rect x="205" y="60" width="1" height="1" fill="#0000ff"/><rect x="194" y="61" width="1" height="1" fill="#000"/><rect x="198" y="61" width="1" height="1" fill="#0000ff"/><rect x="205" y="61" width="1" height="1" fill="#0000ff"/><rect x="194" y="62" width="1" height="1" fill="#000"/><rect x="198" y="62" width="1" height="1" fill="#0000ff"/><rect x="205" y="62" width="1" height="1" fill="#0000ff"/><rect x="194" y="63" width="1" height="1" fill="#000"/><rect x="199" y="63" width="1" height="1" fill="#0000ff"/><rect x="204" y="63" width="1" height="1" fill="#0000ff"/><rect x="194" y="64" width="1" height="1" fill="#000"/><rect x="199" y="64" width="2" height="1" fill="#0000ff"/><rect x="203" y="64" width="2" height="1" fill="#0000ff"/><rect x="193" y="65" width="3" height="1" fill="#000"/><rect x="200" y="65" width="4" height="1" fill="#0000ff"/><rect x="197" y="67" width="1" height="1" fill="#000"/><rect x="207" y="67" width="1" height="1" fill="#000"/><rect x="197" y="68" width="11" height="1" fill="#000"/><rect x="197" y="69" width="1" height="1" fill="#000"/><rect x="207" y="69" width="1" height="1" fill="#000"/></g><g class="ce"><rect x="219" y="55" width="1" height="1" fill="#000"/><rect x="216" y="56" width="1" height="1" fill="#0000ff"/><rect x="218" y="56" width="3" height="1" fill="#000"/><rect x="219" y="57" width="1" height="1" fill="#000"/><rect x="218" y="58" width="2" height="1" fill="#000"/><rect x="216" y="59" width="1" height="1" fill="#ff0000"/><rect x="219" y="59" width="1" height="1" fill="#000"/><rect x="219" y="60" width="1" height="1" fill="#000"/><rect x="218" y="61" width="2" height="1" fill="#000"/><rect x="216" y="62" width="1" height="1" fill="#ff0000"/><rect x="219" y="62" width="1" height="1" fill="#000"/><rect x="219" y="63" width="1" height="1" fill="#000"/><rect x="218" y="64" width="2" height="1" fill="#000"/><rect x="216" y="65" width="1" height="1" fill="#ff0000"/><rect x="219" y="65" width="1" height="1" fill="#000"/><rect x="229" y="65" width="1" height="1" fill="#000"/><rect x="219" y="66" width="1" height="1" fill="#000"/><rect x="230" y="66" width="1" height="1" fill="#000"/><rect x="219" y="67" width="13" height="1" fill="#000"/><rect x="221" y="68" width="1" height="1" fill="#000"/><rect x="224" y="68" width="1" height="1" fill="#000"/><rect x="227" y="68" width="1" height="1" fill="#000"/><rect x="230" y="68" width="1" height="1" fill="#000"/><rect x="221" y="70" width="1" height="1" fill="#ff0000"/><rect x="224" y="70" width="1" height="1" fill="#ff0000"/><rect x="227" y="70" width="1" height="1" fill="#ff0000"/><rect x="230" y="70" width="1" height="1" fill="#0000ff"/></g><g class="ce"><rect x="240" y="55" width="1" height="1" fill="#000"/><rect x="239" y="56" width="3" height="1" fill="#000"/><rect x="240" y="57" width="1" height="1" fill="#000"/><rect x="243" y="57" width="1" height="1" fill="#ff0000"/><rect x="246" y="57" width="1" height="1" fill="#ff0000"/><rect x="249" y="57" width="1" height="1" fill="#ff0000"/><rect x="239" y="58" width="2" height="1" fill="#000"/><rect x="243" y="58" width="1" height="1" fill="#ff0000"/><rect x="246" y="58" width="1" height="1" fill="#ff0000"/><rect x="249" y="58" width="1" height="1" fill="#ff0000"/><rect x="240" y="59" width="1" height="1" fill="#000"/><rect x="241" y="59" width="2" height="1" fill="#0000ff"/><rect x="243" y="59" width="1" height="1" fill="#ff0000"/><rect x="244" y="59" width="2" height="1" fill="#0000ff"/><rect x="246" y="59" width="1" height="1" fill="#ff0000"/><rect x="247" y="59" width="2" height="1" fill="#0000ff"/><rect x="249" y="59" width="1" height="1" fill="#ff0000"/><rect x="250" y="59" width="2" height="1" fill="#0000ff"/><rect x="240" y="60" width="1" height="1" fill="#000"/><rect x="243" y="60" width="1" height="1" fill="#ff0000"/><rect x="246" y="60" width="1" height="1" fill="#ff0000"/><rect x="249" y="60" width="1" height="1" fill="#ff0000"/><rect x="239" y="61" width="2" height="1" fill="#000"/><rect x="243" y="61" width="1" height="1" fill="#ff0000"/><rect x="246" y="61" width="1" height="1" fill="#ff0000"/><rect x="249" y="61" width="1" height="1" fill="#ff0000"/><rect x="240" y="62" width="1" height="1" fill="#000"/><rect x="241" y="62" width="2" height="1" fill="#0000ff"/><rect x="243" y="62" width="1" height="1" fill="#ff0000"/><rect x="244" y="62" width="2" height="1" fill="#0000ff"/><rect x="246" y="62" width="1" height="1" fill="#ff0000"/><rect x="247" y="62" width="2" height="1" fill="#0000ff"/><rect x="249" y="62" width="1" height="1" fill="#ff0000"/><rect x="250" y="62" width="2" height="1" fill="#0000ff"/><rect x="240" y="63" width="1" height="1" fill="#000"/><rect x="243" y="63" width="1" height="1" fill="#ff0000"/><rect x="246" y="63" width="1" height="1" fill="#ff0000"/><rect x="249" y="63" width="1" height="1" fill="#ff0000"/><rect x="239" y="64" width="2" height="1" fill="#000"/><rect x="243" y="64" width="1" height="1" fill="#ff0000"/><rect x="246" y="64" width="1" height="1" fill="#ff0000"/><rect x="249" y="64" width="1" height="1" fill="#ff0000"/><rect x="240" y="65" width="1" height="1" fill="#000"/><rect x="241" y="65" width="2" height="1" fill="#0000ff"/><rect x="243" y="65" width="1" height="1" fill="#ff0000"/><rect x="244" y="65" width="2" height="1" fill="#0000ff"/><rect x="246" y="65" width="1" height="1" fill="#ff0000"/><rect x="247" y="65" width="2" height="1" fill="#0000ff"/><rect x="249" y="65" width="1" height="1" fill="#ff0000"/><rect x="250" y="65" width="2" height="1" fill="#0000ff"/><rect x="240" y="66" width="1" height="1" fill="#000"/><rect x="243" y="66" width="1" height="1" fill="#ff0000"/><rect x="246" y="66" width="1" height="1" fill="#ff0000"/><rect x="249" y="66" width="1" height="1" fill="#ff0000"/><rect x="253" y="66" width="1" height="1" fill="#000"/><rect x="240" y="67" width="15" height="1" fill="#000"/><rect x="243" y="68" width="1" height="1" fill="#000"/><rect x="246" y="68" width="1" height="1" fill="#000"/><rect x="249" y="68" width="1" height="1" fill="#000"/><rect x="252" y="68" width="2" height="1" fill="#000"/></g><rect class="ce" x="260" y="52" width="1" height="22" fill="#aca899"/><rect class="ce" x="261" y="52" width="1" height="22" fill="#fff"/><g class="ce"><rect x="275" y="55" width="1" height="1" fill="#000"/><rect x="274" y="56" width="3" height="1" fill="#000"/><rect x="273" y="57" width="1" height="1" fill="#000"/><rect x="275" y="57" width="1" height="1" fill="#000"/><rect x="277" y="57" width="1" height="1" fill="#000"/><rect x="275" y="58" width="1" height="1" fill="#000"/><rect x="275" y="59" width="1" height="1" fill="#000"/><rect x="275" y="60" width="1" height="1" fill="#000"/></g><g class="ce"><rect x="275" y="64" width="1" height="1" fill="#000"/><rect x="275" y="65" width="1" height="1" fill="#000"/><rect x="275" y="66" width="1" height="1" fill="#000"/><rect x="273" y="67" width="1" height="1" fill="#000"/><rect x="275" y="67" width="1" height="1" fill="#000"/><rect x="277" y="67" width="1" height="1" fill="#000"/><rect x="274" y="68" width="3" height="1" fill="#000"/><rect x="275" y="69" width="1" height="1" fill="#000"/></g><g class="ce"><rect x="270" y="60" width="1" height="1" fill="#000"/><rect x="269" y="61" width="1" height="1" fill="#000"/><rect x="268" y="62" width="6" height="1" fill="#000"/><rect x="269" y="63" width="1" height="1" fill="#000"/><rect x="270" y="64" width="1" height="1" fill="#000"/></g><g class="ce"><rect x="280" y="60" width="1" height="1" fill="#000"/><rect x="281" y="61" width="1" height="1" fill="#000"/><rect x="277" y="62" width="6" height="1" fill="#000"/><rect x="281" y="63" width="1" height="1" fill="#000"/><rect x="280" y="64" width="1" height="1" fill="#000"/></g><g class="ce"><rect x="298" y="55" width="1" height="1" fill="#000"/><rect x="297" y="56" width="3" height="1" fill="#000"/><rect x="296" y="57" width="1" height="1" fill="#000"/><rect x="298" y="57" width="1" height="1" fill="#000"/><rect x="300" y="57" width="1" height="1" fill="#000"/><rect x="298" y="58" width="1" height="1" fill="#000"/><rect x="298" y="59" width="1" height="1" fill="#000"/><rect x="298" y="60" width="1" height="1" fill="#000"/></g><g class="ce"><rect x="298" y="64" width="1" height="1" fill="#000"/><rect x="298" y="65" width="1" height="1" fill="#000"/><rect x="298" y="66" width="1" height="1" fill="#000"/><rect x="296" y="67" width="1" height="1" fill="#000"/><rect x="298" y="67" width="1" height="1" fill="#000"/><rect x="300" y="67" width="1" height="1" fill="#000"/><rect x="297" y="68" width="3" height="1" fill="#000"/><rect x="298" y="69" width="1" height="1" fill="#000"/></g><g class="ce"><rect x="316" y="60" width="1" height="1" fill="#000"/><rect x="315" y="61" width="1" height="1" fill="#000"/><rect x="314" y="62" width="6" height="1" fill="#000"/><rect x="315" y="63" width="1" height="1" fill="#000"/><rect x="316" y="64" width="1" height="1" fill="#000"/></g><g class="ce"><rect x="326" y="60" width="1" height="1" fill="#000"/><rect x="327" y="61" width="1" height="1" fill="#000"/><rect x="323" y="62" width="6" height="1" fill="#000"/><rect x="327" y="63" width="1" height="1" fill="#000"/><rect x="326" y="64" width="1" height="1" fill="#000"/></g><rect class="ce" x="335" y="52" width="1" height="22" fill="#aca899"/><rect class="ce" x="336" y="52" width="1" height="22" fill="#fff"/><g class="ce"><rect x="350" y="55" width="1" height="1" fill="#000"/><rect x="350" y="56" width="1" height="1" fill="#000"/><rect x="350" y="57" width="1" height="1" fill="#000"/><rect x="348" y="58" width="1" height="1" fill="#000"/><rect x="350" y="58" width="1" height="1" fill="#000"/><rect x="352" y="58" width="1" height="1" fill="#000"/><rect x="349" y="59" width="3" height="1" fill="#000"/><rect x="350" y="60" width="1" height="1" fill="#000"/></g><g class="ce"><rect x="350" y="64" width="1" height="1" fill="#000"/><rect x="349" y="65" width="3" height="1" fill="#000"/><rect x="348" y="66" width="1" height="1" fill="#000"/><rect x="350" y="66" width="1" height="1" fill="#000"/><rect x="352" y="66" width="1" height="1" fill="#000"/><rect x="350" y="67" width="1" height="1" fill="#000"/><rect x="350" y="68" width="1" height="1" fill="#000"/><rect x="350" y="69" width="1" height="1" fill="#000"/></g><g class="ce"><rect x="346" y="60" width="1" height="1" fill="#000"/><rect x="347" y="61" width="1" height="1" fill="#000"/><rect x="343" y="62" width="6" height="1" fill="#000"/><rect x="347" y="63" width="1" height="1" fill="#000"/><rect x="346" y="64" width="1" height="1" fill="#000"/></g><g class="ce"><rect x="354" y="60" width="1" height="1" fill="#000"/><rect x="353" y="61" width="1" height="1" fill="#000"/><rect x="352" y="62" width="6" height="1" fill="#000"/><rect x="353" y="63" width="1" height="1" fill="#000"/><rect x="354" y="64" width="1" height="1" fill="#000"/></g><g class="ce"><rect x="373" y="55" width="1" height="1" fill="#000"/><rect x="373" y="56" width="1" height="1" fill="#000"/><rect x="373" y="57" width="1" height="1" fill="#000"/><rect x="371" y="58" width="1" height="1" fill="#000"/><rect x="373" y="58" width="1" height="1" fill="#000"/><rect x="375" y="58" width="1" height="1" fill="#000"/><rect x="372" y="59" width="3" height="1" fill="#000"/><rect x="373" y="60" width="1" height="1" fill="#000"/></g><g class="ce"><rect x="373" y="64" width="1" height="1" fill="#000"/><rect x="372" y="65" width="3" height="1" fill="#000"/><rect x="371" y="66" width="1" height="1" fill="#000"/><rect x="373" y="66" width="1" height="1" fill="#000"/><rect x="375" y="66" width="1" height="1" fill="#000"/><rect x="373" y="67" width="1" height="1" fill="#000"/><rect x="373" y="68" width="1" height="1" fill="#000"/><rect x="373" y="69" width="1" height="1" fill="#000"/></g><g class="ce"><rect x="392" y="60" width="1" height="1" fill="#000"/><rect x="393" y="61" width="1" height="1" fill="#000"/><rect x="389" y="62" width="6" height="1" fill="#000"/><rect x="393" y="63" width="1" height="1" fill="#000"/><rect x="392" y="64" width="1" height="1" fill="#000"/></g><g class="ce"><rect x="400" y="60" width="1" height="1" fill="#000"/><rect x="399" y="61" width="1" height="1" fill="#000"/><rect x="398" y="62" width="6" height="1" fill="#000"/><rect x="399" y="63" width="1" height="1" fill="#000"/><rect x="400" y="64" width="1" height="1" fill="#000"/></g><rect class="ce" x="410" y="52" width="1" height="22" fill="#aca899"/><rect class="ce" x="411" y="52" width="1" height="22" fill="#fff"/><g class="ce"><rect x="422" y="60" width="2" height="1" fill="#000"/><rect x="421" y="61" width="2" height="1" fill="#000"/><rect x="420" y="62" width="11" height="1" fill="#000"/><rect x="421" y="63" width="2" height="1" fill="#000"/><rect x="422" y="64" width="2" height="1" fill="#000"/></g><g class="ce"><rect x="450" y="60" width="2" height="1" fill="#000"/><rect x="451" y="61" width="2" height="1" fill="#000"/><rect x="443" y="62" width="11" height="1" fill="#000"/><rect x="451" y="63" width="2" height="1" fill="#000"/><rect x="450" y="64" width="2" height="1" fill="#000"/></g><g class="ce"><rect x="471" y="56" width="1" height="1" fill="#000"/><rect x="470" y="57" width="3" height="1" fill="#000"/><rect x="469" y="58" width="5" height="1" fill="#000"/><rect x="469" y="59" width="1" height="1" fill="#000"/><rect x="471" y="59" width="1" height="1" fill="#000"/><rect x="473" y="59" width="1" height="1" fill="#000"/><rect x="471" y="60" width="1" height="1" fill="#000"/><rect x="471" y="61" width="1" height="1" fill="#000"/><rect x="471" y="62" width="1" height="1" fill="#000"/><rect x="471" y="63" width="1" height="1" fill="#000"/><rect x="471" y="64" width="1" height="1" fill="#000"/><rect x="471" y="65" width="1" height="1" fill="#000"/><rect x="471" y="66" width="1" height="1" fill="#000"/><rect x="471" y="67" width="1" height="1" fill="#000"/><rect x="471" y="68" width="1" height="1" fill="#000"/></g><g class="ce"><rect x="494" y="56" width="1" height="1" fill="#000"/><rect x="494" y="57" width="1" height="1" fill="#000"/><rect x="494" y="58" width="1" height="1" fill="#000"/><rect x="494" y="59" width="1" height="1" fill="#000"/><rect x="494" y="60" width="1" height="1" fill="#000"/><rect x="494" y="61" width="1" height="1" fill="#000"/><rect x="494" y="62" width="1" height="1" fill="#000"/><rect x="494" y="63" width="1" height="1" fill="#000"/><rect x="494" y="64" width="1" height="1" fill="#000"/><rect x="492" y="65" width="1" height="1" fill="#000"/><rect x="494" y="65" width="1" height="1" fill="#000"/><rect x="496" y="65" width="1" height="1" fill="#000"/><rect x="492" y="66" width="5" height="1" fill="#000"/><rect x="493" y="67" width="3" height="1" fill="#000"/><rect x="494" y="68" width="1" height="1" fill="#000"/></g><rect class="ce" x="508" y="52" width="1" height="22" fill="#aca899"/><rect class="ce" x="509" y="52" width="1" height="22" fill="#fff"/><g class="ce"><rect x="523" y="55" width="1" height="1" fill="#000"/><rect x="522" y="56" width="3" height="1" fill="#000"/><rect x="523" y="57" width="1" height="1" fill="#000"/><rect x="519" y="58" width="4" height="1" fill="#808080"/><rect x="523" y="58" width="1" height="1" fill="#000"/><rect x="524" y="58" width="5" height="1" fill="#808080"/><rect x="519" y="59" width="1" height="1" fill="#808080"/><rect x="523" y="59" width="1" height="1" fill="#000"/><rect x="528" y="59" width="1" height="1" fill="#808080"/><rect x="519" y="60" width="1" height="1" fill="#808080"/><rect x="523" y="60" width="1" height="1" fill="#000"/><rect x="528" y="60" width="1" height="1" fill="#808080"/><rect x="519" y="61" width="1" height="1" fill="#808080"/><rect x="523" y="61" width="1" height="1" fill="#000"/><rect x="528" y="61" width="1" height="1" fill="#808080"/><rect x="519" y="62" width="1" height="1" fill="#808080"/><rect x="523" y="62" width="1" height="1" fill="#000"/><rect x="528" y="62" width="1" height="1" fill="#808080"/><rect x="530" y="62" width="1" height="1" fill="#000"/><rect x="516" y="63" width="16" height="1" fill="#000"/><rect x="519" y="64" width="1" height="1" fill="#808080"/><rect x="523" y="64" width="1" height="1" fill="#000"/><rect x="528" y="64" width="1" height="1" fill="#808080"/><rect x="530" y="64" width="1" height="1" fill="#000"/><rect x="519" y="65" width="1" height="1" fill="#808080"/><rect x="523" y="65" width="1" height="1" fill="#000"/><rect x="528" y="65" width="1" height="1" fill="#808080"/><rect x="519" y="66" width="1" height="1" fill="#808080"/><rect x="523" y="66" width="1" height="1" fill="#000"/><rect x="528" y="66" width="1" height="1" fill="#808080"/><rect x="519" y="67" width="4" height="1" fill="#808080"/><rect x="523" y="67" width="1" height="1" fill="#000"/><rect x="524" y="67" width="5" height="1" fill="#808080"/><rect x="523" y="68" width="1" height="1" fill="#000"/><rect x="523" y="69" width="1" height="1" fill="#000"/><rect x="523" y="70" width="1" height="1" fill="#000"/></g><g class="ce"><rect x="546" y="55" width="1" height="1" fill="#000"/><rect x="545" y="56" width="3" height="1" fill="#000"/><rect x="540" y="57" width="1" height="1" fill="#000"/><rect x="546" y="57" width="1" height="1" fill="#000"/><rect x="552" y="57" width="1" height="1" fill="#000"/><rect x="541" y="58" width="1" height="1" fill="#000"/><rect x="546" y="58" width="1" height="1" fill="#000"/><rect x="551" y="58" width="1" height="1" fill="#000"/><rect x="542" y="59" width="1" height="1" fill="#000"/><rect x="544" y="59" width="1" height="1" fill="#000"/><rect x="546" y="59" width="1" height="1" fill="#000"/><rect x="548" y="59" width="1" height="1" fill="#000"/><rect x="550" y="59" width="1" height="1" fill="#000"/><rect x="543" y="60" width="2" height="1" fill="#000"/><rect x="546" y="60" width="1" height="1" fill="#000"/><rect x="548" y="60" width="2" height="1" fill="#000"/><rect x="542" y="61" width="3" height="1" fill="#000"/><rect x="546" y="61" width="1" height="1" fill="#000"/><rect x="548" y="61" width="3" height="1" fill="#000"/><rect x="546" y="62" width="1" height="1" fill="#000"/><rect x="553" y="62" width="1" height="1" fill="#000"/><rect x="539" y="63" width="16" height="1" fill="#000"/><rect x="546" y="64" width="1" height="1" fill="#000"/><rect x="553" y="64" width="1" height="1" fill="#000"/><rect x="542" y="65" width="3" height="1" fill="#000"/><rect x="546" y="65" width="1" height="1" fill="#000"/><rect x="548" y="65" width="3" height="1" fill="#000"/><rect x="543" y="66" width="2" height="1" fill="#000"/><rect x="546" y="66" width="1" height="1" fill="#000"/><rect x="548" y="66" width="2" height="1" fill="#000"/><rect x="542" y="67" width="1" height="1" fill="#000"/><rect x="544" y="67" width="1" height="1" fill="#000"/><rect x="546" y="67" width="1" height="1" fill="#000"/><rect x="548" y="67" width="1" height="1" fill="#000"/><rect x="550" y="67" width="1" height="1" fill="#000"/><rect x="541" y="68" width="1" height="1" fill="#000"/><rect x="546" y="68" width="1" height="1" fill="#000"/><rect x="551" y="68" width="1" height="1" fill="#000"/><rect x="540" y="69" width="1" height="1" fill="#000"/><rect x="546" y="69" width="1" height="1" fill="#000"/><rect x="552" y="69" width="1" height="1" fill="#000"/><rect x="546" y="70" width="1" height="1" fill="#000"/></g><rect class="ce" x="560" y="52" width="1" height="22" fill="#aca899"/><rect class="ce" x="561" y="52" width="1" height="22" fill="#fff"/><rect class="ce" x="588" y="51" width="1" height="25" fill="#aca899"/><rect class="ce" x="589" y="51" width="1" height="25" fill="#fff"/><rect class="ce" x="593" y="52" width="1" height="22" fill="#fff"/><rect class="ce" x="594" y="52" width="1" height="22" fill="#e4e1d0"/><rect class="ce" x="595" y="52" width="1" height="22" fill="#b4b09c"/><rect class="ce" x="596" y="52" width="1" height="22" fill="#fff"/><rect class="ce" x="597" y="52" width="1" height="22" fill="#e4e1d0"/><rect class="ce" x="598" y="52" width="1" height="22" fill="#b4b09c"/><g class="ce"><rect x="606" y="55" width="11" height="1" fill="#000"/><rect x="606" y="56" width="1" height="1" fill="#000"/><rect x="607" y="56" width="9" height="1" fill="#f4f2e8"/><rect x="616" y="56" width="1" height="1" fill="#000"/><rect x="606" y="57" width="1" height="1" fill="#000"/><rect x="607" y="57" width="1" height="1" fill="#f4f2e8"/><rect x="608" y="57" width="7" height="1" fill="#808080"/><rect x="615" y="57" width="1" height="1" fill="#fff"/><rect x="616" y="57" width="1" height="1" fill="#000"/><rect x="606" y="58" width="1" height="1" fill="#000"/><rect x="607" y="58" width="9" height="1" fill="#f4f2e8"/><rect x="616" y="58" width="1" height="1" fill="#000"/><rect x="606" y="59" width="1" height="1" fill="#000"/><rect x="607" y="59" width="9" height="1" fill="#f4f2e8"/><rect x="616" y="59" width="1" height="1" fill="#000"/><rect x="606" y="60" width="1" height="1" fill="#000"/><rect x="607" y="60" width="1" height="1" fill="#f4f2e8"/><rect x="608" y="60" width="1" height="1" fill="#000080"/><rect x="609" y="60" width="1" height="1" fill="#f4f2e8"/><rect x="610" y="60" width="1" height="1" fill="#000080"/><rect x="611" y="60" width="1" height="1" fill="#f4f2e8"/><rect x="612" y="60" width="1" height="1" fill="#000080"/><rect x="613" y="60" width="1" height="1" fill="#f4f2e8"/><rect x="614" y="60" width="1" height="1" fill="#000080"/><rect x="615" y="60" width="1" height="1" fill="#f4f2e8"/><rect x="616" y="60" width="1" height="1" fill="#000"/><rect x="606" y="61" width="1" height="1" fill="#000"/><rect x="607" y="61" width="9" height="1" fill="#f4f2e8"/><rect x="616" y="61" width="1" height="1" fill="#000"/><rect x="606" y="62" width="1" height="1" fill="#000"/><rect x="607" y="62" width="1" height="1" fill="#f4f2e8"/><rect x="608" y="62" width="1" height="1" fill="#000080"/><rect x="609" y="62" width="1" height="1" fill="#f4f2e8"/><rect x="610" y="62" width="1" height="1" fill="#000080"/><rect x="611" y="62" width="1" height="1" fill="#f4f2e8"/><rect x="612" y="62" width="1" height="1" fill="#000080"/><rect x="613" y="62" width="1" height="1" fill="#f4f2e8"/><rect x="614" y="62" width="1" height="1" fill="#000080"/><rect x="615" y="62" width="1" height="1" fill="#f4f2e8"/><rect x="616" y="62" width="1" height="1" fill="#000"/><rect x="606" y="63" width="1" height="1" fill="#000"/><rect x="607" y="63" width="9" height="1" fill="#f4f2e8"/><rect x="616" y="63" width="1" height="1" fill="#000"/><rect x="606" y="64" width="1" height="1" fill="#000"/><rect x="607" y="64" width="1" height="1" fill="#f4f2e8"/><rect x="608" y="64" width="1" height="1" fill="#000080"/><rect x="609" y="64" width="1" height="1" fill="#f4f2e8"/><rect x="610" y="64" width="1" height="1" fill="#000080"/><rect x="611" y="64" width="1" height="1" fill="#f4f2e8"/><rect x="612" y="64" width="1" height="1" fill="#000080"/><rect x="613" y="64" width="1" height="1" fill="#f4f2e8"/><rect x="614" y="64" width="1" height="1" fill="#000080"/><rect x="615" y="64" width="1" height="1" fill="#f4f2e8"/><rect x="616" y="64" width="1" height="1" fill="#000"/><rect x="606" y="65" width="1" height="1" fill="#000"/><rect x="607" y="65" width="9" height="1" fill="#f4f2e8"/><rect x="616" y="65" width="1" height="1" fill="#000"/><rect x="606" y="66" width="1" height="1" fill="#000"/><rect x="607" y="66" width="1" height="1" fill="#f4f2e8"/><rect x="608" y="66" width="1" height="1" fill="#000080"/><rect x="609" y="66" width="1" height="1" fill="#f4f2e8"/><rect x="610" y="66" width="1" height="1" fill="#000080"/><rect x="611" y="66" width="1" height="1" fill="#f4f2e8"/><rect x="612" y="66" width="1" height="1" fill="#000080"/><rect x="613" y="66" width="1" height="1" fill="#f4f2e8"/><rect x="614" y="66" width="1" height="1" fill="#000080"/><rect x="615" y="66" width="1" height="1" fill="#f4f2e8"/><rect x="616" y="66" width="1" height="1" fill="#000"/><rect x="606" y="67" width="1" height="1" fill="#000"/><rect x="607" y="67" width="9" height="1" fill="#f4f2e8"/><rect x="616" y="67" width="1" height="1" fill="#000"/><rect x="606" y="68" width="1" height="1" fill="#000"/><rect x="607" y="68" width="1" height="1" fill="#f4f2e8"/><rect x="608" y="68" width="1" height="1" fill="#000080"/><rect x="609" y="68" width="1" height="1" fill="#f4f2e8"/><rect x="610" y="68" width="1" height="1" fill="#000080"/><rect x="611" y="68" width="1" height="1" fill="#f4f2e8"/><rect x="612" y="68" width="1" height="1" fill="#000080"/><rect x="613" y="68" width="1" height="1" fill="#f4f2e8"/><rect x="614" y="68" width="1" height="1" fill="#ff0000"/><rect x="615" y="68" width="1" height="1" fill="#f4f2e8"/><rect x="616" y="68" width="1" height="1" fill="#000"/><rect x="606" y="69" width="1" height="1" fill="#000"/><rect x="607" y="69" width="9" height="1" fill="#f4f2e8"/><rect x="616" y="69" width="1" height="1" fill="#000"/><rect x="606" y="70" width="11" height="1" fill="#000"/></g><g class="ce"><rect x="627" y="56" width="15" height="1" fill="#000"/><rect x="627" y="57" width="1" height="1" fill="#000"/><rect x="628" y="57" width="2" height="1" fill="#ffffc0"/><rect x="630" y="57" width="9" height="1" fill="#0000ff"/><rect x="639" y="57" width="2" height="1" fill="#ffffc0"/><rect x="641" y="57" width="1" height="1" fill="#000"/><rect x="627" y="58" width="1" height="1" fill="#000"/><rect x="628" y="58" width="13" height="1" fill="#0000ff"/><rect x="641" y="58" width="1" height="1" fill="#000"/><rect x="627" y="59" width="1" height="1" fill="#000"/><rect x="628" y="59" width="13" height="1" fill="#fff"/><rect x="641" y="59" width="1" height="1" fill="#000"/><rect x="627" y="60" width="1" height="1" fill="#000"/><rect x="628" y="60" width="1" height="1" fill="#fff"/><rect x="629" y="60" width="2" height="1" fill="#000"/><rect x="631" y="60" width="1" height="1" fill="#fff"/><rect x="632" y="60" width="2" height="1" fill="#000"/><rect x="634" y="60" width="2" height="1" fill="#fff"/><rect x="636" y="60" width="2" height="1" fill="#000"/><rect x="638" y="60" width="1" height="1" fill="#fff"/><rect x="639" y="60" width="3" height="1" fill="#000"/><rect x="627" y="61" width="1" height="1" fill="#000"/><rect x="628" y="61" width="13" height="1" fill="#fff"/><rect x="641" y="61" width="1" height="1" fill="#000"/><rect x="627" y="62" width="1" height="1" fill="#000"/><rect x="628" y="62" width="1" height="1" fill="#fff"/><rect x="629" y="62" width="2" height="1" fill="#000"/><rect x="631" y="62" width="1" height="1" fill="#fff"/><rect x="632" y="62" width="2" height="1" fill="#000"/><rect x="634" y="62" width="2" height="1" fill="#fff"/><rect x="636" y="62" width="2" height="1" fill="#000"/><rect x="638" y="62" width="1" height="1" fill="#fff"/><rect x="639" y="62" width="3" height="1" fill="#000"/><rect x="627" y="63" width="1" height="1" fill="#000"/><rect x="628" y="63" width="13" height="1" fill="#fff"/><rect x="641" y="63" width="1" height="1" fill="#000"/><rect x="627" y="64" width="1" height="1" fill="#000"/><rect x="628" y="64" width="1" height="1" fill="#fff"/><rect x="629" y="64" width="2" height="1" fill="#000"/><rect x="631" y="64" width="1" height="1" fill="#fff"/><rect x="632" y="64" width="2" height="1" fill="#000"/><rect x="634" y="64" width="2" height="1" fill="#fff"/><rect x="636" y="64" width="2" height="1" fill="#000"/><rect x="638" y="64" width="1" height="1" fill="#fff"/><rect x="639" y="64" width="3" height="1" fill="#000"/><rect x="627" y="65" width="1" height="1" fill="#000"/><rect x="628" y="65" width="13" height="1" fill="#fff"/><rect x="641" y="65" width="1" height="1" fill="#000"/><rect x="627" y="66" width="1" height="1" fill="#000"/><rect x="628" y="66" width="1" height="1" fill="#fff"/><rect x="629" y="66" width="2" height="1" fill="#000"/><rect x="631" y="66" width="1" height="1" fill="#fff"/><rect x="632" y="66" width="2" height="1" fill="#000"/><rect x="634" y="66" width="2" height="1" fill="#fff"/><rect x="636" y="66" width="2" height="1" fill="#000"/><rect x="638" y="66" width="1" height="1" fill="#fff"/><rect x="639" y="66" width="3" height="1" fill="#000"/><rect x="627" y="67" width="1" height="1" fill="#000"/><rect x="628" y="67" width="13" height="1" fill="#fff"/><rect x="641" y="67" width="1" height="1" fill="#000"/><rect x="627" y="68" width="15" height="1" fill="#000"/></g><circle cx="659.6" cy="63.4" r="3.1" fill="rgba(236,233,216,.35)" stroke="#000" stroke-width="1.1"/><path d="M662 65.8L663.4 67.2" stroke="#000" stroke-width="1.4"/><path d="M663.6 67.3L665.2 68.9" stroke="#000" stroke-width="2.6" stroke-linecap="round"/><path d="M674 70.5L688 57" stroke="#0000ff" stroke-width="1" fill="none"/><path d="M676 55Q678 62 681 64Q684 66 688.5 65.5" stroke="#ff0000" stroke-width="1.2" fill="none"/><circle cx="680.8" cy="63.6" r="3.1" fill="none" stroke="#000" stroke-width="1.1"/><path d="M683.2 66L684.6 67.4" stroke="#000" stroke-width="1.4"/><path d="M684.8 67.5L686.4 69.1" stroke="#000" stroke-width="2.6" stroke-linecap="round"/><path d="M695.5 68V66.5L698 65.5V68Z" fill="#000080"/><rect class="ce" x="9" y="78" width="1" height="22" fill="#fff"/><rect class="ce" x="10" y="78" width="1" height="22" fill="#e4e1d0"/><rect class="ce" x="11" y="78" width="1" height="22" fill="#b4b09c"/><rect class="ce" x="12" y="78" width="1" height="22" fill="#fff"/><rect class="ce" x="13" y="78" width="1" height="22" fill="#e4e1d0"/><rect class="ce" x="14" y="78" width="1" height="22" fill="#b4b09c"/><g class="ce"><rect x="182" y="87" width="7" height="1" fill="#000"/><rect x="183" y="88" width="5" height="1" fill="#000"/><rect x="184" y="89" width="3" height="1" fill="#000"/><rect x="185" y="90" width="1" height="1" fill="#000"/></g><rect class="ce" x="198" y="78" width="1" height="22" fill="#aca899"/><rect class="ce" x="199" y="78" width="1" height="22" fill="#fff"/><path d="M207.8 87.3Q209 83.2 211.2 85.5Q213 87.6 214.5 90Q216.8 93.6 219.2 92.2Q221 91 221.4 89.2" stroke="#000" stroke-width="1.7" fill="none" stroke-linecap="round"/><path class="ce" d="M231.5 83L237.5 95L243.5 83" stroke="#0000ff" stroke-width="1" fill="none"/><g class="ce"><rect x="314" y="87" width="7" height="1" fill="#000"/><rect x="315" y="88" width="5" height="1" fill="#000"/><rect x="316" y="89" width="3" height="1" fill="#000"/><rect x="317" y="90" width="1" height="1" fill="#000"/></g><rect class="ce" x="254" y="89" width="52" height="1" fill="#000"/><g class="ce"><rect x="394" y="87" width="7" height="1" fill="#000"/><rect x="395" y="88" width="5" height="1" fill="#000"/><rect x="396" y="89" width="3" height="1" fill="#000"/><rect x="397" y="90" width="1" height="1" fill="#000"/></g><rect class="ce" x="334" y="89" width="52" height="1" fill="#000"/><g class="ce"><rect x="413" y="82" width="1" height="1" fill="#0000ff"/><rect x="425" y="82" width="1" height="1" fill="#0000ff"/><rect x="414" y="84" width="1" height="1" fill="#0000ff"/><rect x="424" y="84" width="1" height="1" fill="#0000ff"/><rect x="415" y="86" width="1" height="1" fill="#0000ff"/><rect x="423" y="86" width="1" height="1" fill="#0000ff"/><rect x="416" y="88" width="1" height="1" fill="#0000ff"/><rect x="422" y="88" width="1" height="1" fill="#0000ff"/><rect x="417" y="90" width="1" height="1" fill="#0000ff"/><rect x="421" y="90" width="1" height="1" fill="#0000ff"/><rect x="418" y="92" width="1" height="1" fill="#0000ff"/><rect x="420" y="92" width="1" height="1" fill="#0000ff"/><rect x="419" y="94" width="1" height="1" fill="#0000ff"/><rect x="419" y="94" width="1" height="1" fill="#0000ff"/></g><g class="ce"><rect x="456" y="87" width="7" height="1" fill="#000"/><rect x="457" y="88" width="5" height="1" fill="#000"/><rect x="458" y="89" width="3" height="1" fill="#000"/><rect x="459" y="90" width="1" height="1" fill="#000"/></g><rect class="ce" x="442" y="89" width="1" height="1" fill="#000"/><g class="ce"><rect x="495" y="87" width="7" height="1" fill="#000"/><rect x="496" y="88" width="5" height="1" fill="#000"/><rect x="497" y="89" width="3" height="1" fill="#000"/><rect x="498" y="90" width="1" height="1" fill="#000"/></g><rect class="ce" x="477" y="85" width="9" height="9" fill="#000"/><g class="ce"><rect x="575" y="87" width="7" height="1" fill="#000"/><rect x="576" y="88" width="5" height="1" fill="#000"/><rect x="577" y="89" width="3" height="1" fill="#000"/><rect x="578" y="90" width="1" height="1" fill="#000"/></g><rect class="ce" x="513" y="82" width="55" height="14" fill="#008000"/><rect class="ce" x="591" y="78" width="1" height="22" fill="#aca899"/><rect class="ce" x="592" y="78" width="1" height="22" fill="#fff"/><g class="ce"><rect x="606" y="82" width="6" height="1" fill="#000"/><rect x="613" y="82" width="2" height="1" fill="#000080"/><rect x="605" y="83" width="1" height="1" fill="#000"/><rect x="606" y="83" width="1" height="1" fill="#202020"/><rect x="607" y="83" width="1" height="1" fill="#fff"/><rect x="608" y="83" width="5" height="1" fill="#b4b4b8"/><rect x="613" y="83" width="2" height="1" fill="#000080"/><rect x="604" y="84" width="1" height="1" fill="#000"/><rect x="605" y="84" width="1" height="1" fill="#202020"/><rect x="606" y="84" width="1" height="1" fill="#fff"/><rect x="607" y="84" width="1" height="1" fill="#202020"/><rect x="608" y="84" width="5" height="1" fill="#b4b4b8"/><rect x="613" y="84" width="2" height="1" fill="#000080"/><rect x="599" y="85" width="5" height="1" fill="#000"/><rect x="604" y="85" width="1" height="1" fill="#202020"/><rect x="605" y="85" width="1" height="1" fill="#fff"/><rect x="606" y="85" width="1" height="1" fill="#202020"/><rect x="607" y="85" width="1" height="1" fill="#fff"/><rect x="608" y="85" width="1" height="1" fill="#202020"/><rect x="609" y="85" width="4" height="1" fill="#b4b4b8"/><rect x="613" y="85" width="2" height="1" fill="#000080"/><rect x="599" y="86" width="1" height="1" fill="#000"/><rect x="600" y="86" width="2" height="1" fill="#fff"/><rect x="602" y="86" width="1" height="1" fill="#000"/><rect x="603" y="86" width="1" height="1" fill="#202020"/><rect x="604" y="86" width="1" height="1" fill="#fff"/><rect x="605" y="86" width="1" height="1" fill="#202020"/><rect x="606" y="86" width="1" height="1" fill="#fff"/><rect x="607" y="86" width="1" height="1" fill="#202020"/><rect x="608" y="86" width="1" height="1" fill="#fff"/><rect x="609" y="86" width="1" height="1" fill="#202020"/><rect x="610" y="86" width="3" height="1" fill="#b4b4b8"/><rect x="613" y="86" width="2" height="1" fill="#000080"/><rect x="599" y="87" width="1" height="1" fill="#000"/><rect x="600" y="87" width="1" height="1" fill="#fff"/><rect x="601" y="87" width="2" height="1" fill="#000"/><rect x="603" y="87" width="1" height="1" fill="#fff"/><rect x="604" y="87" width="1" height="1" fill="#202020"/><rect x="605" y="87" width="1" height="1" fill="#fff"/><rect x="606" y="87" width="1" height="1" fill="#202020"/><rect x="607" y="87" width="1" height="1" fill="#fff"/><rect x="608" y="87" width="1" height="1" fill="#202020"/><rect x="609" y="87" width="1" height="1" fill="#fff"/><rect x="610" y="87" width="3" height="1" fill="#000"/><rect x="613" y="87" width="2" height="1" fill="#000080"/><rect x="599" y="88" width="1" height="1" fill="#000"/><rect x="600" y="88" width="1" height="1" fill="#fff"/><rect x="601" y="88" width="1" height="1" fill="#000"/><rect x="602" y="88" width="3" height="1" fill="#fff"/><rect x="605" y="88" width="1" height="1" fill="#202020"/><rect x="606" y="88" width="1" height="1" fill="#fff"/><rect x="607" y="88" width="1" height="1" fill="#202020"/><rect x="608" y="88" width="1" height="1" fill="#fff"/><rect x="609" y="88" width="1" height="1" fill="#202020"/><rect x="610" y="88" width="1" height="1" fill="#000"/><rect x="599" y="89" width="1" height="1" fill="#000"/><rect x="600" y="89" width="6" height="1" fill="#fff"/><rect x="606" y="89" width="1" height="1" fill="#202020"/><rect x="607" y="89" width="1" height="1" fill="#fff"/><rect x="608" y="89" width="1" height="1" fill="#202020"/><rect x="609" y="89" width="1" height="1" fill="#fff"/><rect x="610" y="89" width="1" height="1" fill="#000"/><rect x="599" y="90" width="1" height="1" fill="#000"/><rect x="600" y="90" width="7" height="1" fill="#fff"/><rect x="607" y="90" width="1" height="1" fill="#202020"/><rect x="608" y="90" width="2" height="1" fill="#fff"/><rect x="610" y="90" width="1" height="1" fill="#000"/><rect x="599" y="91" width="1" height="1" fill="#000"/><rect x="600" y="91" width="1" height="1" fill="#fff"/><rect x="601" y="91" width="2" height="1" fill="#000"/><rect x="603" y="91" width="1" height="1" fill="#fff"/><rect x="604" y="91" width="5" height="1" fill="#000"/><rect x="609" y="91" width="1" height="1" fill="#fff"/><rect x="610" y="91" width="1" height="1" fill="#000"/><rect x="599" y="92" width="1" height="1" fill="#000"/><rect x="600" y="92" width="10" height="1" fill="#fff"/><rect x="610" y="92" width="1" height="1" fill="#000"/><rect x="599" y="93" width="1" height="1" fill="#000"/><rect x="600" y="93" width="1" height="1" fill="#fff"/><rect x="601" y="93" width="2" height="1" fill="#000"/><rect x="603" y="93" width="1" height="1" fill="#fff"/><rect x="604" y="93" width="5" height="1" fill="#000"/><rect x="609" y="93" width="1" height="1" fill="#fff"/><rect x="610" y="93" width="1" height="1" fill="#000"/><rect x="599" y="94" width="1" height="1" fill="#000"/><rect x="600" y="94" width="10" height="1" fill="#fff"/><rect x="610" y="94" width="1" height="1" fill="#000"/><rect x="599" y="95" width="12" height="1" fill="#000"/></g><rect class="ce" x="620" y="78" width="1" height="22" fill="#aca899"/><rect class="ce" x="621" y="78" width="1" height="22" fill="#fff"/><g class="ce"><rect x="630" y="87" width="1" height="1" fill="#000"/><rect x="630" y="88" width="1" height="1" fill="#000"/><rect x="628" y="89" width="5" height="1" fill="#000"/><rect x="630" y="90" width="1" height="1" fill="#000"/><rect x="630" y="91" width="1" height="1" fill="#000"/></g><g class="ce"><rect x="653" y="86" width="1" height="1" fill="#000"/><rect x="653" y="87" width="1" height="1" fill="#000"/><rect x="651" y="88" width="5" height="1" fill="#000"/><rect x="653" y="89" width="1" height="1" fill="#000"/><rect x="653" y="90" width="1" height="1" fill="#000"/></g><g class="ce"><rect x="657" y="83" width="10" height="1" fill="#000"/><rect x="657" y="84" width="1" height="1" fill="#000"/><rect x="658" y="84" width="8" height="1" fill="#0000ff"/><rect x="666" y="84" width="1" height="1" fill="#000"/><rect x="657" y="85" width="1" height="1" fill="#000"/><rect x="658" y="85" width="2" height="1" fill="#fff"/><rect x="660" y="85" width="1" height="1" fill="#c0c0c0"/><rect x="661" y="85" width="2" height="1" fill="#fff"/><rect x="663" y="85" width="1" height="1" fill="#c0c0c0"/><rect x="664" y="85" width="2" height="1" fill="#fff"/><rect x="666" y="85" width="1" height="1" fill="#000"/><rect x="657" y="86" width="1" height="1" fill="#000"/><rect x="658" y="86" width="2" height="1" fill="#fff"/><rect x="660" y="86" width="1" height="1" fill="#c0c0c0"/><rect x="661" y="86" width="2" height="1" fill="#fff"/><rect x="663" y="86" width="1" height="1" fill="#c0c0c0"/><rect x="664" y="86" width="2" height="1" fill="#fff"/><rect x="666" y="86" width="1" height="1" fill="#000"/><rect x="657" y="87" width="1" height="1" fill="#000"/><rect x="658" y="87" width="8" height="1" fill="#c0c0c0"/><rect x="666" y="87" width="1" height="1" fill="#000"/><rect x="657" y="88" width="1" height="1" fill="#000"/><rect x="658" y="88" width="2" height="1" fill="#fff"/><rect x="660" y="88" width="1" height="1" fill="#c0c0c0"/><rect x="661" y="88" width="2" height="1" fill="#fff"/><rect x="663" y="88" width="1" height="1" fill="#c0c0c0"/><rect x="664" y="88" width="2" height="1" fill="#fff"/><rect x="666" y="88" width="1" height="1" fill="#000"/><rect x="657" y="89" width="1" height="1" fill="#000"/><rect x="658" y="89" width="2" height="1" fill="#fff"/><rect x="660" y="89" width="1" height="1" fill="#c0c0c0"/><rect x="661" y="89" width="2" height="1" fill="#fff"/><rect x="663" y="89" width="1" height="1" fill="#c0c0c0"/><rect x="664" y="89" width="2" height="1" fill="#fff"/><rect x="666" y="89" width="1" height="1" fill="#000"/><rect x="657" y="90" width="1" height="1" fill="#000"/><rect x="658" y="90" width="8" height="1" fill="#c0c0c0"/><rect x="666" y="90" width="1" height="1" fill="#000"/><rect x="657" y="91" width="1" height="1" fill="#000"/><rect x="658" y="91" width="2" height="1" fill="#fff"/><rect x="660" y="91" width="1" height="1" fill="#c0c0c0"/><rect x="661" y="91" width="2" height="1" fill="#fff"/><rect x="663" y="91" width="1" height="1" fill="#c0c0c0"/><rect x="664" y="91" width="2" height="1" fill="#fff"/><rect x="666" y="91" width="1" height="1" fill="#000"/><rect x="657" y="92" width="1" height="1" fill="#000"/><rect x="658" y="92" width="2" height="1" fill="#fff"/><rect x="660" y="92" width="1" height="1" fill="#c0c0c0"/><rect x="661" y="92" width="2" height="1" fill="#fff"/><rect x="663" y="92" width="1" height="1" fill="#c0c0c0"/><rect x="664" y="92" width="2" height="1" fill="#fff"/><rect x="666" y="92" width="1" height="1" fill="#000"/><rect x="657" y="93" width="10" height="1" fill="#000"/></g><path d="M675.2 83.6L677.4 82.2L681.8 87.4L688.2 94.2L687.6 95.4L685.2 94.2L680 89Z" fill="#ff0000"/><path d="M688.4 82.2L687.8 83.4L679 95.2L675.6 95.4L675.6 93.6L680.8 88.2Z" fill="#ff0000"/><path d="M189.8 111.8L195.2 117.2M195.2 111.8L189.8 117.2" stroke="#fff" stroke-width="2" stroke-linecap="square" fill="none"/><g fill="none"><path d="M684 616.5L697.5 603" stroke="#fff" stroke-width="1.3"/><path d="M685.5 616.5L697.5 604.5" stroke="#a5a28f" stroke-width="1.6"/><path d="M688 616.5L697.5 607" stroke="#fff" stroke-width="1.3"/><path d="M689.5 616.5L697.5 608.5" stroke="#a5a28f" stroke-width="1.6"/><path d="M692 616.5L697.5 611" stroke="#fff" stroke-width="1.3"/><path d="M693.5 616.5L697.5 612.5" stroke="#a5a28f" stroke-width="1.6"/></g></svg>
</div></body></html>
